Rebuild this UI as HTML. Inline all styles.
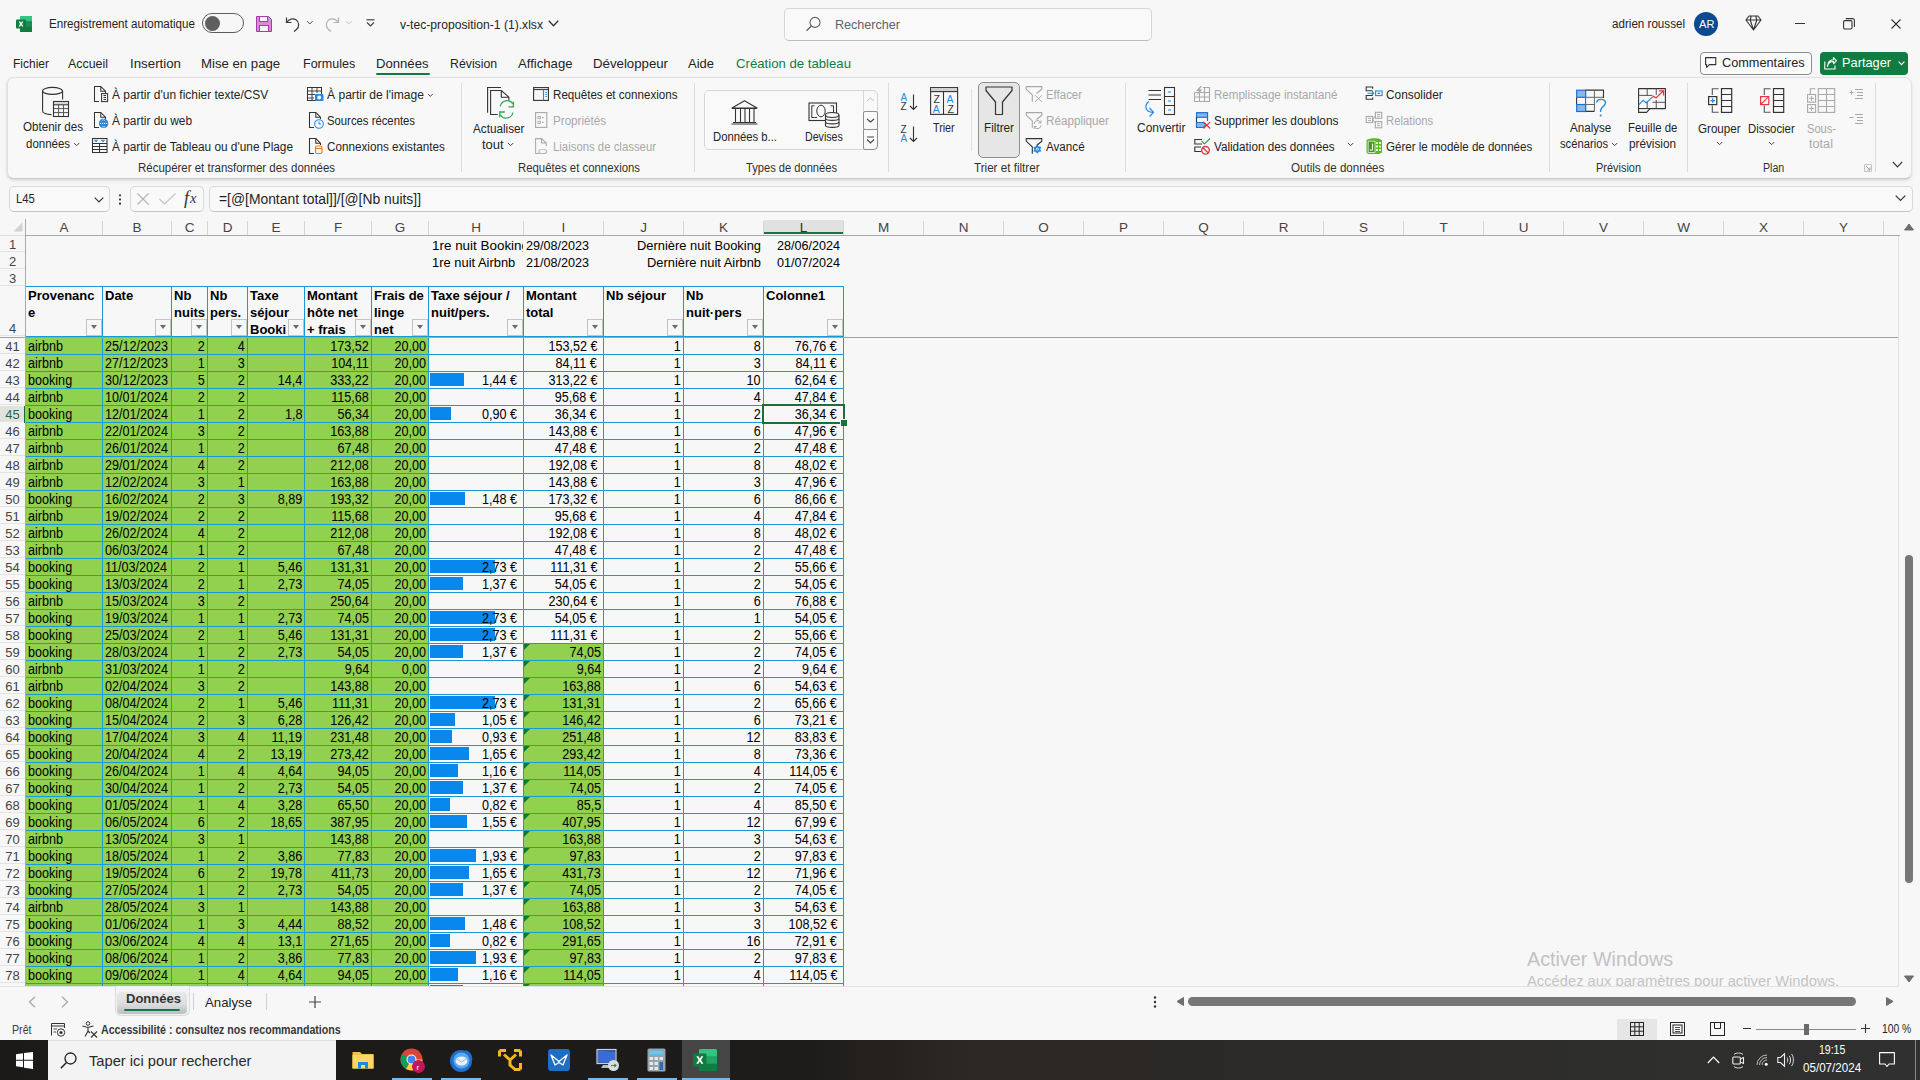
<!DOCTYPE html>
<html><head><meta charset="utf-8"><style>
html,body {margin:0;padding:0;width:1920px;height:1080px;overflow:hidden;background:#f7f7f7;font-family:"Liberation Sans",sans-serif}
div {box-sizing:border-box}

.grid {position:absolute;left:0;top:0;width:1920px;height:1080px;overflow:hidden}
.ch {position:absolute;top:219px;height:16px;line-height:17px;text-align:center;font-size:13.5px;color:#444;}
.ch.sel {background:#e1e1e1;color:#2e2e2e;border-bottom:2px solid #1e7145;height:14px;top:220px;line-height:15px}
.chsep {position:absolute;top:221px;height:14px;width:1px;background:#d4d4d4}
.rh {position:absolute;left:0;width:25px;text-align:center;font-size:13px;color:#444;box-sizing:border-box;border-bottom:1px solid #e3e3e3}
.rh.sel {background:#e1e1e1;color:#1e6e3c}
.c {position:absolute;font-size:13px;letter-spacing:-0.2px;line-height:16px;color:#000;white-space:nowrap}
.c.r {text-align:right}
.clip {position:absolute;overflow:hidden}
.th {position:absolute;font-weight:bold;font-size:13px;color:#000;}
.tht {position:absolute;left:2px;top:0px;line-height:17px;white-space:nowrap;letter-spacing:0px}
.fb {position:absolute;right:0px;bottom:0px;width:16px;height:17px;border:1px solid #c4c4c4;background:#f7f7f7;box-sizing:border-box}
.fb i {position:absolute;left:3.5px;top:5px;width:0;height:0;border-left:3.5px solid transparent;border-right:3.5px solid transparent;border-top:4.5px solid #6a6a6a}
.td {position:absolute;height:16px;font-size:13px;letter-spacing:-0.2px;line-height:16px;color:#000;white-space:nowrap;overflow:hidden}
.td span {position:absolute;top:0px;font-size:14px;letter-spacing:0;transform:scaleX(.9)}
.td.l span {left:2px;transform-origin:0 0}
.td.r span {right:2px;transform-origin:100% 0}
.bar {position:absolute;left:1px;top:1px;height:13px;background:#0888ec}
.tri {position:absolute;left:0;top:0;width:0;height:0;border-top:6px solid #0a7d2c;border-right:6px solid transparent}
.vl {position:absolute;width:1px;background:#1a9ad4}
.hl {position:absolute;left:25px;width:819px;height:1px;background:#1a9ad4}
.selbox {position:absolute;border:2px solid #1e6e3c;box-sizing:content-box}


.abs {position:absolute}
.t {position:absolute;white-space:nowrap;color:#242424}
svg {overflow:visible}

</style></head><body>
<div class="grid">
<div class="ch" style="left:26px;width:76px">A</div>
<div class="chsep" style="left:102px"></div>
<div class="ch" style="left:103px;width:68px">B</div>
<div class="chsep" style="left:171px"></div>
<div class="ch" style="left:172px;width:35px">C</div>
<div class="chsep" style="left:207px"></div>
<div class="ch" style="left:208px;width:39px">D</div>
<div class="chsep" style="left:247px"></div>
<div class="ch" style="left:248px;width:56px">E</div>
<div class="chsep" style="left:304px"></div>
<div class="ch" style="left:305px;width:66px">F</div>
<div class="chsep" style="left:371px"></div>
<div class="ch" style="left:372px;width:56px">G</div>
<div class="chsep" style="left:428px"></div>
<div class="ch" style="left:429px;width:94px">H</div>
<div class="chsep" style="left:523px"></div>
<div class="ch" style="left:524px;width:79px">I</div>
<div class="chsep" style="left:603px"></div>
<div class="ch" style="left:604px;width:79px">J</div>
<div class="chsep" style="left:683px"></div>
<div class="ch" style="left:684px;width:79px">K</div>
<div class="chsep" style="left:763px"></div>
<div class="ch sel" style="left:764px;width:79px">L</div>
<div class="chsep" style="left:843px"></div>
<div class="ch" style="left:844px;width:79px">M</div>
<div class="chsep" style="left:923px"></div>
<div class="ch" style="left:924px;width:79px">N</div>
<div class="chsep" style="left:1003px"></div>
<div class="ch" style="left:1004px;width:79px">O</div>
<div class="chsep" style="left:1083px"></div>
<div class="ch" style="left:1084px;width:79px">P</div>
<div class="chsep" style="left:1163px"></div>
<div class="ch" style="left:1164px;width:79px">Q</div>
<div class="chsep" style="left:1243px"></div>
<div class="ch" style="left:1244px;width:79px">R</div>
<div class="chsep" style="left:1323px"></div>
<div class="ch" style="left:1324px;width:79px">S</div>
<div class="chsep" style="left:1403px"></div>
<div class="ch" style="left:1404px;width:79px">T</div>
<div class="chsep" style="left:1483px"></div>
<div class="ch" style="left:1484px;width:79px">U</div>
<div class="chsep" style="left:1563px"></div>
<div class="ch" style="left:1564px;width:79px">V</div>
<div class="chsep" style="left:1643px"></div>
<div class="ch" style="left:1644px;width:79px">W</div>
<div class="chsep" style="left:1723px"></div>
<div class="ch" style="left:1724px;width:79px">X</div>
<div class="chsep" style="left:1803px"></div>
<div class="ch" style="left:1804px;width:79px">Y</div>
<div class="chsep" style="left:1883px"></div>
<div class="rh" style="top:236px;height:16px;line-height:17px;padding-top:0px">1</div>
<div class="rh" style="top:253px;height:16px;line-height:17px;padding-top:0px">2</div>
<div class="rh" style="top:270px;height:16px;line-height:17px;padding-top:0px">3</div>
<div class="rh" style="top:287px;height:49px;line-height:17px;padding-top:33px">4</div>
<div class="rh" style="top:338px;height:16px;line-height:17px;padding-top:0px">41</div>
<div class="rh" style="top:355px;height:16px;line-height:17px;padding-top:0px">42</div>
<div class="rh" style="top:372px;height:16px;line-height:17px;padding-top:0px">43</div>
<div class="rh" style="top:389px;height:16px;line-height:17px;padding-top:0px">44</div>
<div class="rh sel" style="top:406px;height:16px;line-height:17px;padding-top:0px">45</div>
<div class="rh" style="top:423px;height:16px;line-height:17px;padding-top:0px">46</div>
<div class="rh" style="top:440px;height:16px;line-height:17px;padding-top:0px">47</div>
<div class="rh" style="top:457px;height:16px;line-height:17px;padding-top:0px">48</div>
<div class="rh" style="top:474px;height:16px;line-height:17px;padding-top:0px">49</div>
<div class="rh" style="top:491px;height:16px;line-height:17px;padding-top:0px">50</div>
<div class="rh" style="top:508px;height:16px;line-height:17px;padding-top:0px">51</div>
<div class="rh" style="top:525px;height:16px;line-height:17px;padding-top:0px">52</div>
<div class="rh" style="top:542px;height:16px;line-height:17px;padding-top:0px">53</div>
<div class="rh" style="top:559px;height:16px;line-height:17px;padding-top:0px">54</div>
<div class="rh" style="top:576px;height:16px;line-height:17px;padding-top:0px">55</div>
<div class="rh" style="top:593px;height:16px;line-height:17px;padding-top:0px">56</div>
<div class="rh" style="top:610px;height:16px;line-height:17px;padding-top:0px">57</div>
<div class="rh" style="top:627px;height:16px;line-height:17px;padding-top:0px">58</div>
<div class="rh" style="top:644px;height:16px;line-height:17px;padding-top:0px">59</div>
<div class="rh" style="top:661px;height:16px;line-height:17px;padding-top:0px">60</div>
<div class="rh" style="top:678px;height:16px;line-height:17px;padding-top:0px">61</div>
<div class="rh" style="top:695px;height:16px;line-height:17px;padding-top:0px">62</div>
<div class="rh" style="top:712px;height:16px;line-height:17px;padding-top:0px">63</div>
<div class="rh" style="top:729px;height:16px;line-height:17px;padding-top:0px">64</div>
<div class="rh" style="top:746px;height:16px;line-height:17px;padding-top:0px">65</div>
<div class="rh" style="top:763px;height:16px;line-height:17px;padding-top:0px">66</div>
<div class="rh" style="top:780px;height:16px;line-height:17px;padding-top:0px">67</div>
<div class="rh" style="top:797px;height:16px;line-height:17px;padding-top:0px">68</div>
<div class="rh" style="top:814px;height:16px;line-height:17px;padding-top:0px">69</div>
<div class="rh" style="top:831px;height:16px;line-height:17px;padding-top:0px">70</div>
<div class="rh" style="top:848px;height:16px;line-height:17px;padding-top:0px">71</div>
<div class="rh" style="top:865px;height:16px;line-height:17px;padding-top:0px">72</div>
<div class="rh" style="top:882px;height:16px;line-height:17px;padding-top:0px">73</div>
<div class="rh" style="top:899px;height:16px;line-height:17px;padding-top:0px">74</div>
<div class="rh" style="top:916px;height:16px;line-height:17px;padding-top:0px">75</div>
<div class="rh" style="top:933px;height:16px;line-height:17px;padding-top:0px">76</div>
<div class="rh" style="top:950px;height:16px;line-height:17px;padding-top:0px">77</div>
<div class="rh" style="top:967px;height:16px;line-height:17px;padding-top:0px">78</div>
<div class="rh" style="top:984px;height:16px;line-height:17px;padding-top:0px">79</div>
<div class="clip" style="left:429px;top:236px;width:94px;height:16px"><div class="t" style="left:2.7px;top:1.7px;font-size:13.5px;line-height:15.5px;color:#000;font-weight:normal;transform-origin:0 0;transform:scaleX(0.9943);">1re nuit Booking</div></div>
<div class="t" style="left:431.7px;top:254.7px;font-size:13.5px;line-height:15.5px;color:#000;font-weight:normal;transform-origin:0 0;transform:scaleX(0.9569);">1re nuit Airbnb</div>
<div class="t" style="left:526px;top:237.7px;font-size:13.5px;line-height:15.5px;color:#000;font-weight:normal;transform-origin:0 0;transform:scaleX(0.9325);">29/08/2023</div>
<div class="t" style="left:526px;top:254.7px;font-size:13.5px;line-height:15.5px;color:#000;font-weight:normal;transform-origin:0 0;transform:scaleX(0.9325);">21/08/2023</div>
<div class="t" style="left:637px;top:237.7px;font-size:13.5px;line-height:15.5px;color:#000;font-weight:normal;transform-origin:0 0;transform:scaleX(0.9552);">Dernière nuit Booking</div>
<div class="t" style="left:647px;top:254.7px;font-size:13.5px;line-height:15.5px;color:#000;font-weight:normal;transform-origin:0 0;transform:scaleX(0.9555);">Dernière nuit Airbnb</div>
<div class="t" style="left:776.7px;top:237.7px;font-size:13.5px;line-height:15.5px;color:#000;font-weight:normal;transform-origin:0 0;transform:scaleX(0.9325);">28/06/2024</div>
<div class="t" style="left:776.7px;top:254.7px;font-size:13.5px;line-height:15.5px;color:#000;font-weight:normal;transform-origin:0 0;transform:scaleX(0.9325);">01/07/2024</div>
<div style="position:absolute;left:24px;top:406px;width:2px;height:17px;background:#1e6e3c"></div>
<div class="th" style="left:26px;top:287px;width:76px;height:49px"><div class="tht">Provenanc<br>e</div><div class="fb"><i></i></div></div>
<div class="th" style="left:103px;top:287px;width:68px;height:49px"><div class="tht">Date</div><div class="fb"><i></i></div></div>
<div class="th" style="left:172px;top:287px;width:35px;height:49px"><div class="tht">Nb<br>nuits</div><div class="fb"><i></i></div></div>
<div class="th" style="left:208px;top:287px;width:39px;height:49px"><div class="tht">Nb<br>pers.</div><div class="fb"><i></i></div></div>
<div class="th" style="left:248px;top:287px;width:56px;height:49px"><div class="tht">Taxe<br>séjour<br>Booki</div><div class="fb"><i></i></div></div>
<div class="th" style="left:305px;top:287px;width:66px;height:49px"><div class="tht">Montant<br>hôte net<br>+ frais</div><div class="fb"><i></i></div></div>
<div class="th" style="left:372px;top:287px;width:56px;height:49px"><div class="tht">Frais de<br>linge<br>net</div><div class="fb"><i></i></div></div>
<div class="th" style="left:429px;top:287px;width:94px;height:49px"><div class="tht">Taxe séjour /<br>nuit/pers.</div><div class="fb"><i></i></div></div>
<div class="th" style="left:524px;top:287px;width:79px;height:49px"><div class="tht">Montant<br>total</div><div class="fb"><i></i></div></div>
<div class="th" style="left:604px;top:287px;width:79px;height:49px"><div class="tht">Nb séjour</div><div class="fb"><i></i></div></div>
<div class="th" style="left:684px;top:287px;width:79px;height:49px"><div class="tht">Nb<br>nuit·pers</div><div class="fb"><i></i></div></div>
<div class="th" style="left:764px;top:287px;width:79px;height:49px"><div class="tht">Colonne1</div><div class="fb"><i></i></div></div>
<div class="td l" style="left:26px;top:338px;width:76px;background:#92d050"><span>airbnb</span></div>
<div class="td l" style="left:103px;top:338px;width:68px;background:#92d050"><span>25/12/2023</span></div>
<div class="td r" style="left:172px;top:338px;width:35px;background:#92d050"><span>2</span></div>
<div class="td r" style="left:208px;top:338px;width:39px;background:#92d050"><span>4</span></div>
<div class="td r" style="left:248px;top:338px;width:56px;background:#92d050"></div>
<div class="td r" style="left:305px;top:338px;width:66px;background:#92d050"><span>173,52</span></div>
<div class="td r" style="left:372px;top:338px;width:56px;background:#92d050"><span>20,00</span></div>
<div class="td r" style="left:429px;top:338px;width:94px;background:transparent"></div>
<div class="td r" style="left:524px;top:338px;width:79px;background:transparent"><span style="right:6px">153,52 €</span></div>
<div class="td r" style="left:604px;top:338px;width:79px;background:transparent"><span>1</span></div>
<div class="td r" style="left:684px;top:338px;width:79px;background:transparent"><span>8</span></div>
<div class="td r" style="left:764px;top:338px;width:79px;background:transparent"><span style="right:6px">76,76 €</span></div>
<div class="td l" style="left:26px;top:355px;width:76px;background:#92d050"><span>airbnb</span></div>
<div class="td l" style="left:103px;top:355px;width:68px;background:#92d050"><span>27/12/2023</span></div>
<div class="td r" style="left:172px;top:355px;width:35px;background:#92d050"><span>1</span></div>
<div class="td r" style="left:208px;top:355px;width:39px;background:#92d050"><span>3</span></div>
<div class="td r" style="left:248px;top:355px;width:56px;background:#92d050"></div>
<div class="td r" style="left:305px;top:355px;width:66px;background:#92d050"><span>104,11</span></div>
<div class="td r" style="left:372px;top:355px;width:56px;background:#92d050"><span>20,00</span></div>
<div class="td r" style="left:429px;top:355px;width:94px;background:transparent"></div>
<div class="td r" style="left:524px;top:355px;width:79px;background:transparent"><span style="right:6px">84,11 €</span></div>
<div class="td r" style="left:604px;top:355px;width:79px;background:transparent"><span>1</span></div>
<div class="td r" style="left:684px;top:355px;width:79px;background:transparent"><span>3</span></div>
<div class="td r" style="left:764px;top:355px;width:79px;background:transparent"><span style="right:6px">84,11 €</span></div>
<div class="td l" style="left:26px;top:372px;width:76px;background:#92d050"><span>booking</span></div>
<div class="td l" style="left:103px;top:372px;width:68px;background:#92d050"><span>30/12/2023</span></div>
<div class="td r" style="left:172px;top:372px;width:35px;background:#92d050"><span>5</span></div>
<div class="td r" style="left:208px;top:372px;width:39px;background:#92d050"><span>2</span></div>
<div class="td r" style="left:248px;top:372px;width:56px;background:#92d050"><span>14,4</span></div>
<div class="td r" style="left:305px;top:372px;width:66px;background:#92d050"><span>333,22</span></div>
<div class="td r" style="left:372px;top:372px;width:56px;background:#92d050"><span>20,00</span></div>
<div class="td r" style="left:429px;top:372px;width:94px;background:transparent"><b class="bar" style="width:34px"></b><span style="right:6px">1,44 €</span></div>
<div class="td r" style="left:524px;top:372px;width:79px;background:transparent"><span style="right:6px">313,22 €</span></div>
<div class="td r" style="left:604px;top:372px;width:79px;background:transparent"><span>1</span></div>
<div class="td r" style="left:684px;top:372px;width:79px;background:transparent"><span>10</span></div>
<div class="td r" style="left:764px;top:372px;width:79px;background:transparent"><span style="right:6px">62,64 €</span></div>
<div class="td l" style="left:26px;top:389px;width:76px;background:#92d050"><span>airbnb</span></div>
<div class="td l" style="left:103px;top:389px;width:68px;background:#92d050"><span>10/01/2024</span></div>
<div class="td r" style="left:172px;top:389px;width:35px;background:#92d050"><span>2</span></div>
<div class="td r" style="left:208px;top:389px;width:39px;background:#92d050"><span>2</span></div>
<div class="td r" style="left:248px;top:389px;width:56px;background:#92d050"></div>
<div class="td r" style="left:305px;top:389px;width:66px;background:#92d050"><span>115,68</span></div>
<div class="td r" style="left:372px;top:389px;width:56px;background:#92d050"><span>20,00</span></div>
<div class="td r" style="left:429px;top:389px;width:94px;background:transparent"></div>
<div class="td r" style="left:524px;top:389px;width:79px;background:transparent"><span style="right:6px">95,68 €</span></div>
<div class="td r" style="left:604px;top:389px;width:79px;background:transparent"><span>1</span></div>
<div class="td r" style="left:684px;top:389px;width:79px;background:transparent"><span>4</span></div>
<div class="td r" style="left:764px;top:389px;width:79px;background:transparent"><span style="right:6px">47,84 €</span></div>
<div class="td l" style="left:26px;top:406px;width:76px;background:#92d050"><span>booking</span></div>
<div class="td l" style="left:103px;top:406px;width:68px;background:#92d050"><span>12/01/2024</span></div>
<div class="td r" style="left:172px;top:406px;width:35px;background:#92d050"><span>1</span></div>
<div class="td r" style="left:208px;top:406px;width:39px;background:#92d050"><span>2</span></div>
<div class="td r" style="left:248px;top:406px;width:56px;background:#92d050"><span>1,8</span></div>
<div class="td r" style="left:305px;top:406px;width:66px;background:#92d050"><span>56,34</span></div>
<div class="td r" style="left:372px;top:406px;width:56px;background:#92d050"><span>20,00</span></div>
<div class="td r" style="left:429px;top:406px;width:94px;background:transparent"><b class="bar" style="width:21px"></b><span style="right:6px">0,90 €</span></div>
<div class="td r" style="left:524px;top:406px;width:79px;background:transparent"><span style="right:6px">36,34 €</span></div>
<div class="td r" style="left:604px;top:406px;width:79px;background:transparent"><span>1</span></div>
<div class="td r" style="left:684px;top:406px;width:79px;background:transparent"><span>2</span></div>
<div class="td r" style="left:764px;top:406px;width:79px;background:transparent"><span style="right:6px">36,34 €</span></div>
<div class="td l" style="left:26px;top:423px;width:76px;background:#92d050"><span>airbnb</span></div>
<div class="td l" style="left:103px;top:423px;width:68px;background:#92d050"><span>22/01/2024</span></div>
<div class="td r" style="left:172px;top:423px;width:35px;background:#92d050"><span>3</span></div>
<div class="td r" style="left:208px;top:423px;width:39px;background:#92d050"><span>2</span></div>
<div class="td r" style="left:248px;top:423px;width:56px;background:#92d050"></div>
<div class="td r" style="left:305px;top:423px;width:66px;background:#92d050"><span>163,88</span></div>
<div class="td r" style="left:372px;top:423px;width:56px;background:#92d050"><span>20,00</span></div>
<div class="td r" style="left:429px;top:423px;width:94px;background:transparent"></div>
<div class="td r" style="left:524px;top:423px;width:79px;background:transparent"><span style="right:6px">143,88 €</span></div>
<div class="td r" style="left:604px;top:423px;width:79px;background:transparent"><span>1</span></div>
<div class="td r" style="left:684px;top:423px;width:79px;background:transparent"><span>6</span></div>
<div class="td r" style="left:764px;top:423px;width:79px;background:transparent"><span style="right:6px">47,96 €</span></div>
<div class="td l" style="left:26px;top:440px;width:76px;background:#92d050"><span>airbnb</span></div>
<div class="td l" style="left:103px;top:440px;width:68px;background:#92d050"><span>26/01/2024</span></div>
<div class="td r" style="left:172px;top:440px;width:35px;background:#92d050"><span>1</span></div>
<div class="td r" style="left:208px;top:440px;width:39px;background:#92d050"><span>2</span></div>
<div class="td r" style="left:248px;top:440px;width:56px;background:#92d050"></div>
<div class="td r" style="left:305px;top:440px;width:66px;background:#92d050"><span>67,48</span></div>
<div class="td r" style="left:372px;top:440px;width:56px;background:#92d050"><span>20,00</span></div>
<div class="td r" style="left:429px;top:440px;width:94px;background:transparent"></div>
<div class="td r" style="left:524px;top:440px;width:79px;background:transparent"><span style="right:6px">47,48 €</span></div>
<div class="td r" style="left:604px;top:440px;width:79px;background:transparent"><span>1</span></div>
<div class="td r" style="left:684px;top:440px;width:79px;background:transparent"><span>2</span></div>
<div class="td r" style="left:764px;top:440px;width:79px;background:transparent"><span style="right:6px">47,48 €</span></div>
<div class="td l" style="left:26px;top:457px;width:76px;background:#92d050"><span>airbnb</span></div>
<div class="td l" style="left:103px;top:457px;width:68px;background:#92d050"><span>29/01/2024</span></div>
<div class="td r" style="left:172px;top:457px;width:35px;background:#92d050"><span>4</span></div>
<div class="td r" style="left:208px;top:457px;width:39px;background:#92d050"><span>2</span></div>
<div class="td r" style="left:248px;top:457px;width:56px;background:#92d050"></div>
<div class="td r" style="left:305px;top:457px;width:66px;background:#92d050"><span>212,08</span></div>
<div class="td r" style="left:372px;top:457px;width:56px;background:#92d050"><span>20,00</span></div>
<div class="td r" style="left:429px;top:457px;width:94px;background:transparent"></div>
<div class="td r" style="left:524px;top:457px;width:79px;background:transparent"><span style="right:6px">192,08 €</span></div>
<div class="td r" style="left:604px;top:457px;width:79px;background:transparent"><span>1</span></div>
<div class="td r" style="left:684px;top:457px;width:79px;background:transparent"><span>8</span></div>
<div class="td r" style="left:764px;top:457px;width:79px;background:transparent"><span style="right:6px">48,02 €</span></div>
<div class="td l" style="left:26px;top:474px;width:76px;background:#92d050"><span>airbnb</span></div>
<div class="td l" style="left:103px;top:474px;width:68px;background:#92d050"><span>12/02/2024</span></div>
<div class="td r" style="left:172px;top:474px;width:35px;background:#92d050"><span>3</span></div>
<div class="td r" style="left:208px;top:474px;width:39px;background:#92d050"><span>1</span></div>
<div class="td r" style="left:248px;top:474px;width:56px;background:#92d050"></div>
<div class="td r" style="left:305px;top:474px;width:66px;background:#92d050"><span>163,88</span></div>
<div class="td r" style="left:372px;top:474px;width:56px;background:#92d050"><span>20,00</span></div>
<div class="td r" style="left:429px;top:474px;width:94px;background:transparent"></div>
<div class="td r" style="left:524px;top:474px;width:79px;background:transparent"><span style="right:6px">143,88 €</span></div>
<div class="td r" style="left:604px;top:474px;width:79px;background:transparent"><span>1</span></div>
<div class="td r" style="left:684px;top:474px;width:79px;background:transparent"><span>3</span></div>
<div class="td r" style="left:764px;top:474px;width:79px;background:transparent"><span style="right:6px">47,96 €</span></div>
<div class="td l" style="left:26px;top:491px;width:76px;background:#92d050"><span>booking</span></div>
<div class="td l" style="left:103px;top:491px;width:68px;background:#92d050"><span>16/02/2024</span></div>
<div class="td r" style="left:172px;top:491px;width:35px;background:#92d050"><span>2</span></div>
<div class="td r" style="left:208px;top:491px;width:39px;background:#92d050"><span>3</span></div>
<div class="td r" style="left:248px;top:491px;width:56px;background:#92d050"><span>8,89</span></div>
<div class="td r" style="left:305px;top:491px;width:66px;background:#92d050"><span>193,32</span></div>
<div class="td r" style="left:372px;top:491px;width:56px;background:#92d050"><span>20,00</span></div>
<div class="td r" style="left:429px;top:491px;width:94px;background:transparent"><b class="bar" style="width:35px"></b><span style="right:6px">1,48 €</span></div>
<div class="td r" style="left:524px;top:491px;width:79px;background:transparent"><span style="right:6px">173,32 €</span></div>
<div class="td r" style="left:604px;top:491px;width:79px;background:transparent"><span>1</span></div>
<div class="td r" style="left:684px;top:491px;width:79px;background:transparent"><span>6</span></div>
<div class="td r" style="left:764px;top:491px;width:79px;background:transparent"><span style="right:6px">86,66 €</span></div>
<div class="td l" style="left:26px;top:508px;width:76px;background:#92d050"><span>airbnb</span></div>
<div class="td l" style="left:103px;top:508px;width:68px;background:#92d050"><span>19/02/2024</span></div>
<div class="td r" style="left:172px;top:508px;width:35px;background:#92d050"><span>2</span></div>
<div class="td r" style="left:208px;top:508px;width:39px;background:#92d050"><span>2</span></div>
<div class="td r" style="left:248px;top:508px;width:56px;background:#92d050"></div>
<div class="td r" style="left:305px;top:508px;width:66px;background:#92d050"><span>115,68</span></div>
<div class="td r" style="left:372px;top:508px;width:56px;background:#92d050"><span>20,00</span></div>
<div class="td r" style="left:429px;top:508px;width:94px;background:transparent"></div>
<div class="td r" style="left:524px;top:508px;width:79px;background:transparent"><span style="right:6px">95,68 €</span></div>
<div class="td r" style="left:604px;top:508px;width:79px;background:transparent"><span>1</span></div>
<div class="td r" style="left:684px;top:508px;width:79px;background:transparent"><span>4</span></div>
<div class="td r" style="left:764px;top:508px;width:79px;background:transparent"><span style="right:6px">47,84 €</span></div>
<div class="td l" style="left:26px;top:525px;width:76px;background:#92d050"><span>airbnb</span></div>
<div class="td l" style="left:103px;top:525px;width:68px;background:#92d050"><span>26/02/2024</span></div>
<div class="td r" style="left:172px;top:525px;width:35px;background:#92d050"><span>4</span></div>
<div class="td r" style="left:208px;top:525px;width:39px;background:#92d050"><span>2</span></div>
<div class="td r" style="left:248px;top:525px;width:56px;background:#92d050"></div>
<div class="td r" style="left:305px;top:525px;width:66px;background:#92d050"><span>212,08</span></div>
<div class="td r" style="left:372px;top:525px;width:56px;background:#92d050"><span>20,00</span></div>
<div class="td r" style="left:429px;top:525px;width:94px;background:transparent"></div>
<div class="td r" style="left:524px;top:525px;width:79px;background:transparent"><span style="right:6px">192,08 €</span></div>
<div class="td r" style="left:604px;top:525px;width:79px;background:transparent"><span>1</span></div>
<div class="td r" style="left:684px;top:525px;width:79px;background:transparent"><span>8</span></div>
<div class="td r" style="left:764px;top:525px;width:79px;background:transparent"><span style="right:6px">48,02 €</span></div>
<div class="td l" style="left:26px;top:542px;width:76px;background:#92d050"><span>airbnb</span></div>
<div class="td l" style="left:103px;top:542px;width:68px;background:#92d050"><span>06/03/2024</span></div>
<div class="td r" style="left:172px;top:542px;width:35px;background:#92d050"><span>1</span></div>
<div class="td r" style="left:208px;top:542px;width:39px;background:#92d050"><span>2</span></div>
<div class="td r" style="left:248px;top:542px;width:56px;background:#92d050"></div>
<div class="td r" style="left:305px;top:542px;width:66px;background:#92d050"><span>67,48</span></div>
<div class="td r" style="left:372px;top:542px;width:56px;background:#92d050"><span>20,00</span></div>
<div class="td r" style="left:429px;top:542px;width:94px;background:transparent"></div>
<div class="td r" style="left:524px;top:542px;width:79px;background:transparent"><span style="right:6px">47,48 €</span></div>
<div class="td r" style="left:604px;top:542px;width:79px;background:transparent"><span>1</span></div>
<div class="td r" style="left:684px;top:542px;width:79px;background:transparent"><span>2</span></div>
<div class="td r" style="left:764px;top:542px;width:79px;background:transparent"><span style="right:6px">47,48 €</span></div>
<div class="td l" style="left:26px;top:559px;width:76px;background:#92d050"><span>booking</span></div>
<div class="td l" style="left:103px;top:559px;width:68px;background:#92d050"><span>11/03/2024</span></div>
<div class="td r" style="left:172px;top:559px;width:35px;background:#92d050"><span>2</span></div>
<div class="td r" style="left:208px;top:559px;width:39px;background:#92d050"><span>1</span></div>
<div class="td r" style="left:248px;top:559px;width:56px;background:#92d050"><span>5,46</span></div>
<div class="td r" style="left:305px;top:559px;width:66px;background:#92d050"><span>131,31</span></div>
<div class="td r" style="left:372px;top:559px;width:56px;background:#92d050"><span>20,00</span></div>
<div class="td r" style="left:429px;top:559px;width:94px;background:transparent"><b class="bar" style="width:65px"></b><span style="right:6px">2,73 €</span></div>
<div class="td r" style="left:524px;top:559px;width:79px;background:transparent"><span style="right:6px">111,31 €</span></div>
<div class="td r" style="left:604px;top:559px;width:79px;background:transparent"><span>1</span></div>
<div class="td r" style="left:684px;top:559px;width:79px;background:transparent"><span>2</span></div>
<div class="td r" style="left:764px;top:559px;width:79px;background:transparent"><span style="right:6px">55,66 €</span></div>
<div class="td l" style="left:26px;top:576px;width:76px;background:#92d050"><span>booking</span></div>
<div class="td l" style="left:103px;top:576px;width:68px;background:#92d050"><span>13/03/2024</span></div>
<div class="td r" style="left:172px;top:576px;width:35px;background:#92d050"><span>2</span></div>
<div class="td r" style="left:208px;top:576px;width:39px;background:#92d050"><span>1</span></div>
<div class="td r" style="left:248px;top:576px;width:56px;background:#92d050"><span>2,73</span></div>
<div class="td r" style="left:305px;top:576px;width:66px;background:#92d050"><span>74,05</span></div>
<div class="td r" style="left:372px;top:576px;width:56px;background:#92d050"><span>20,00</span></div>
<div class="td r" style="left:429px;top:576px;width:94px;background:transparent"><b class="bar" style="width:33px"></b><span style="right:6px">1,37 €</span></div>
<div class="td r" style="left:524px;top:576px;width:79px;background:transparent"><span style="right:6px">54,05 €</span></div>
<div class="td r" style="left:604px;top:576px;width:79px;background:transparent"><span>1</span></div>
<div class="td r" style="left:684px;top:576px;width:79px;background:transparent"><span>2</span></div>
<div class="td r" style="left:764px;top:576px;width:79px;background:transparent"><span style="right:6px">54,05 €</span></div>
<div class="td l" style="left:26px;top:593px;width:76px;background:#92d050"><span>airbnb</span></div>
<div class="td l" style="left:103px;top:593px;width:68px;background:#92d050"><span>15/03/2024</span></div>
<div class="td r" style="left:172px;top:593px;width:35px;background:#92d050"><span>3</span></div>
<div class="td r" style="left:208px;top:593px;width:39px;background:#92d050"><span>2</span></div>
<div class="td r" style="left:248px;top:593px;width:56px;background:#92d050"></div>
<div class="td r" style="left:305px;top:593px;width:66px;background:#92d050"><span>250,64</span></div>
<div class="td r" style="left:372px;top:593px;width:56px;background:#92d050"><span>20,00</span></div>
<div class="td r" style="left:429px;top:593px;width:94px;background:transparent"></div>
<div class="td r" style="left:524px;top:593px;width:79px;background:transparent"><span style="right:6px">230,64 €</span></div>
<div class="td r" style="left:604px;top:593px;width:79px;background:transparent"><span>1</span></div>
<div class="td r" style="left:684px;top:593px;width:79px;background:transparent"><span>6</span></div>
<div class="td r" style="left:764px;top:593px;width:79px;background:transparent"><span style="right:6px">76,88 €</span></div>
<div class="td l" style="left:26px;top:610px;width:76px;background:#92d050"><span>booking</span></div>
<div class="td l" style="left:103px;top:610px;width:68px;background:#92d050"><span>19/03/2024</span></div>
<div class="td r" style="left:172px;top:610px;width:35px;background:#92d050"><span>1</span></div>
<div class="td r" style="left:208px;top:610px;width:39px;background:#92d050"><span>1</span></div>
<div class="td r" style="left:248px;top:610px;width:56px;background:#92d050"><span>2,73</span></div>
<div class="td r" style="left:305px;top:610px;width:66px;background:#92d050"><span>74,05</span></div>
<div class="td r" style="left:372px;top:610px;width:56px;background:#92d050"><span>20,00</span></div>
<div class="td r" style="left:429px;top:610px;width:94px;background:transparent"><b class="bar" style="width:65px"></b><span style="right:6px">2,73 €</span></div>
<div class="td r" style="left:524px;top:610px;width:79px;background:transparent"><span style="right:6px">54,05 €</span></div>
<div class="td r" style="left:604px;top:610px;width:79px;background:transparent"><span>1</span></div>
<div class="td r" style="left:684px;top:610px;width:79px;background:transparent"><span>1</span></div>
<div class="td r" style="left:764px;top:610px;width:79px;background:transparent"><span style="right:6px">54,05 €</span></div>
<div class="td l" style="left:26px;top:627px;width:76px;background:#92d050"><span>booking</span></div>
<div class="td l" style="left:103px;top:627px;width:68px;background:#92d050"><span>25/03/2024</span></div>
<div class="td r" style="left:172px;top:627px;width:35px;background:#92d050"><span>2</span></div>
<div class="td r" style="left:208px;top:627px;width:39px;background:#92d050"><span>1</span></div>
<div class="td r" style="left:248px;top:627px;width:56px;background:#92d050"><span>5,46</span></div>
<div class="td r" style="left:305px;top:627px;width:66px;background:#92d050"><span>131,31</span></div>
<div class="td r" style="left:372px;top:627px;width:56px;background:#92d050"><span>20,00</span></div>
<div class="td r" style="left:429px;top:627px;width:94px;background:transparent"><b class="bar" style="width:65px"></b><span style="right:6px">2,73 €</span></div>
<div class="td r" style="left:524px;top:627px;width:79px;background:transparent"><span style="right:6px">111,31 €</span></div>
<div class="td r" style="left:604px;top:627px;width:79px;background:transparent"><span>1</span></div>
<div class="td r" style="left:684px;top:627px;width:79px;background:transparent"><span>2</span></div>
<div class="td r" style="left:764px;top:627px;width:79px;background:transparent"><span style="right:6px">55,66 €</span></div>
<div class="td l" style="left:26px;top:644px;width:76px;background:#92d050"><span>booking</span></div>
<div class="td l" style="left:103px;top:644px;width:68px;background:#92d050"><span>28/03/2024</span></div>
<div class="td r" style="left:172px;top:644px;width:35px;background:#92d050"><span>1</span></div>
<div class="td r" style="left:208px;top:644px;width:39px;background:#92d050"><span>2</span></div>
<div class="td r" style="left:248px;top:644px;width:56px;background:#92d050"><span>2,73</span></div>
<div class="td r" style="left:305px;top:644px;width:66px;background:#92d050"><span>54,05</span></div>
<div class="td r" style="left:372px;top:644px;width:56px;background:#92d050"><span>20,00</span></div>
<div class="td r" style="left:429px;top:644px;width:94px;background:transparent"><b class="bar" style="width:33px"></b><span style="right:6px">1,37 €</span></div>
<div class="td r" style="left:524px;top:644px;width:79px;background:#92d050"><b class="tri"></b><span>74,05</span></div>
<div class="td r" style="left:604px;top:644px;width:79px;background:transparent"><span>1</span></div>
<div class="td r" style="left:684px;top:644px;width:79px;background:transparent"><span>2</span></div>
<div class="td r" style="left:764px;top:644px;width:79px;background:transparent"><span style="right:6px">74,05 €</span></div>
<div class="td l" style="left:26px;top:661px;width:76px;background:#92d050"><span>airbnb</span></div>
<div class="td l" style="left:103px;top:661px;width:68px;background:#92d050"><span>31/03/2024</span></div>
<div class="td r" style="left:172px;top:661px;width:35px;background:#92d050"><span>1</span></div>
<div class="td r" style="left:208px;top:661px;width:39px;background:#92d050"><span>2</span></div>
<div class="td r" style="left:248px;top:661px;width:56px;background:#92d050"></div>
<div class="td r" style="left:305px;top:661px;width:66px;background:#92d050"><span>9,64</span></div>
<div class="td r" style="left:372px;top:661px;width:56px;background:#92d050"><span>0,00</span></div>
<div class="td r" style="left:429px;top:661px;width:94px;background:transparent"></div>
<div class="td r" style="left:524px;top:661px;width:79px;background:#92d050"><b class="tri"></b><span>9,64</span></div>
<div class="td r" style="left:604px;top:661px;width:79px;background:transparent"><span>1</span></div>
<div class="td r" style="left:684px;top:661px;width:79px;background:transparent"><span>2</span></div>
<div class="td r" style="left:764px;top:661px;width:79px;background:transparent"><span style="right:6px">9,64 €</span></div>
<div class="td l" style="left:26px;top:678px;width:76px;background:#92d050"><span>airbnb</span></div>
<div class="td l" style="left:103px;top:678px;width:68px;background:#92d050"><span>02/04/2024</span></div>
<div class="td r" style="left:172px;top:678px;width:35px;background:#92d050"><span>3</span></div>
<div class="td r" style="left:208px;top:678px;width:39px;background:#92d050"><span>2</span></div>
<div class="td r" style="left:248px;top:678px;width:56px;background:#92d050"></div>
<div class="td r" style="left:305px;top:678px;width:66px;background:#92d050"><span>143,88</span></div>
<div class="td r" style="left:372px;top:678px;width:56px;background:#92d050"><span>20,00</span></div>
<div class="td r" style="left:429px;top:678px;width:94px;background:transparent"></div>
<div class="td r" style="left:524px;top:678px;width:79px;background:#92d050"><b class="tri"></b><span>163,88</span></div>
<div class="td r" style="left:604px;top:678px;width:79px;background:transparent"><span>1</span></div>
<div class="td r" style="left:684px;top:678px;width:79px;background:transparent"><span>6</span></div>
<div class="td r" style="left:764px;top:678px;width:79px;background:transparent"><span style="right:6px">54,63 €</span></div>
<div class="td l" style="left:26px;top:695px;width:76px;background:#92d050"><span>booking</span></div>
<div class="td l" style="left:103px;top:695px;width:68px;background:#92d050"><span>08/04/2024</span></div>
<div class="td r" style="left:172px;top:695px;width:35px;background:#92d050"><span>2</span></div>
<div class="td r" style="left:208px;top:695px;width:39px;background:#92d050"><span>1</span></div>
<div class="td r" style="left:248px;top:695px;width:56px;background:#92d050"><span>5,46</span></div>
<div class="td r" style="left:305px;top:695px;width:66px;background:#92d050"><span>111,31</span></div>
<div class="td r" style="left:372px;top:695px;width:56px;background:#92d050"><span>20,00</span></div>
<div class="td r" style="left:429px;top:695px;width:94px;background:transparent"><b class="bar" style="width:65px"></b><span style="right:6px">2,73 €</span></div>
<div class="td r" style="left:524px;top:695px;width:79px;background:#92d050"><b class="tri"></b><span>131,31</span></div>
<div class="td r" style="left:604px;top:695px;width:79px;background:transparent"><span>1</span></div>
<div class="td r" style="left:684px;top:695px;width:79px;background:transparent"><span>2</span></div>
<div class="td r" style="left:764px;top:695px;width:79px;background:transparent"><span style="right:6px">65,66 €</span></div>
<div class="td l" style="left:26px;top:712px;width:76px;background:#92d050"><span>booking</span></div>
<div class="td l" style="left:103px;top:712px;width:68px;background:#92d050"><span>15/04/2024</span></div>
<div class="td r" style="left:172px;top:712px;width:35px;background:#92d050"><span>2</span></div>
<div class="td r" style="left:208px;top:712px;width:39px;background:#92d050"><span>3</span></div>
<div class="td r" style="left:248px;top:712px;width:56px;background:#92d050"><span>6,28</span></div>
<div class="td r" style="left:305px;top:712px;width:66px;background:#92d050"><span>126,42</span></div>
<div class="td r" style="left:372px;top:712px;width:56px;background:#92d050"><span>20,00</span></div>
<div class="td r" style="left:429px;top:712px;width:94px;background:transparent"><b class="bar" style="width:25px"></b><span style="right:6px">1,05 €</span></div>
<div class="td r" style="left:524px;top:712px;width:79px;background:#92d050"><b class="tri"></b><span>146,42</span></div>
<div class="td r" style="left:604px;top:712px;width:79px;background:transparent"><span>1</span></div>
<div class="td r" style="left:684px;top:712px;width:79px;background:transparent"><span>6</span></div>
<div class="td r" style="left:764px;top:712px;width:79px;background:transparent"><span style="right:6px">73,21 €</span></div>
<div class="td l" style="left:26px;top:729px;width:76px;background:#92d050"><span>booking</span></div>
<div class="td l" style="left:103px;top:729px;width:68px;background:#92d050"><span>17/04/2024</span></div>
<div class="td r" style="left:172px;top:729px;width:35px;background:#92d050"><span>3</span></div>
<div class="td r" style="left:208px;top:729px;width:39px;background:#92d050"><span>4</span></div>
<div class="td r" style="left:248px;top:729px;width:56px;background:#92d050"><span>11,19</span></div>
<div class="td r" style="left:305px;top:729px;width:66px;background:#92d050"><span>231,48</span></div>
<div class="td r" style="left:372px;top:729px;width:56px;background:#92d050"><span>20,00</span></div>
<div class="td r" style="left:429px;top:729px;width:94px;background:transparent"><b class="bar" style="width:22px"></b><span style="right:6px">0,93 €</span></div>
<div class="td r" style="left:524px;top:729px;width:79px;background:#92d050"><b class="tri"></b><span>251,48</span></div>
<div class="td r" style="left:604px;top:729px;width:79px;background:transparent"><span>1</span></div>
<div class="td r" style="left:684px;top:729px;width:79px;background:transparent"><span>12</span></div>
<div class="td r" style="left:764px;top:729px;width:79px;background:transparent"><span style="right:6px">83,83 €</span></div>
<div class="td l" style="left:26px;top:746px;width:76px;background:#92d050"><span>booking</span></div>
<div class="td l" style="left:103px;top:746px;width:68px;background:#92d050"><span>20/04/2024</span></div>
<div class="td r" style="left:172px;top:746px;width:35px;background:#92d050"><span>4</span></div>
<div class="td r" style="left:208px;top:746px;width:39px;background:#92d050"><span>2</span></div>
<div class="td r" style="left:248px;top:746px;width:56px;background:#92d050"><span>13,19</span></div>
<div class="td r" style="left:305px;top:746px;width:66px;background:#92d050"><span>273,42</span></div>
<div class="td r" style="left:372px;top:746px;width:56px;background:#92d050"><span>20,00</span></div>
<div class="td r" style="left:429px;top:746px;width:94px;background:transparent"><b class="bar" style="width:39px"></b><span style="right:6px">1,65 €</span></div>
<div class="td r" style="left:524px;top:746px;width:79px;background:#92d050"><b class="tri"></b><span>293,42</span></div>
<div class="td r" style="left:604px;top:746px;width:79px;background:transparent"><span>1</span></div>
<div class="td r" style="left:684px;top:746px;width:79px;background:transparent"><span>8</span></div>
<div class="td r" style="left:764px;top:746px;width:79px;background:transparent"><span style="right:6px">73,36 €</span></div>
<div class="td l" style="left:26px;top:763px;width:76px;background:#92d050"><span>booking</span></div>
<div class="td l" style="left:103px;top:763px;width:68px;background:#92d050"><span>26/04/2024</span></div>
<div class="td r" style="left:172px;top:763px;width:35px;background:#92d050"><span>1</span></div>
<div class="td r" style="left:208px;top:763px;width:39px;background:#92d050"><span>4</span></div>
<div class="td r" style="left:248px;top:763px;width:56px;background:#92d050"><span>4,64</span></div>
<div class="td r" style="left:305px;top:763px;width:66px;background:#92d050"><span>94,05</span></div>
<div class="td r" style="left:372px;top:763px;width:56px;background:#92d050"><span>20,00</span></div>
<div class="td r" style="left:429px;top:763px;width:94px;background:transparent"><b class="bar" style="width:28px"></b><span style="right:6px">1,16 €</span></div>
<div class="td r" style="left:524px;top:763px;width:79px;background:#92d050"><b class="tri"></b><span>114,05</span></div>
<div class="td r" style="left:604px;top:763px;width:79px;background:transparent"><span>1</span></div>
<div class="td r" style="left:684px;top:763px;width:79px;background:transparent"><span>4</span></div>
<div class="td r" style="left:764px;top:763px;width:79px;background:transparent"><span style="right:6px">114,05 €</span></div>
<div class="td l" style="left:26px;top:780px;width:76px;background:#92d050"><span>booking</span></div>
<div class="td l" style="left:103px;top:780px;width:68px;background:#92d050"><span>30/04/2024</span></div>
<div class="td r" style="left:172px;top:780px;width:35px;background:#92d050"><span>1</span></div>
<div class="td r" style="left:208px;top:780px;width:39px;background:#92d050"><span>2</span></div>
<div class="td r" style="left:248px;top:780px;width:56px;background:#92d050"><span>2,73</span></div>
<div class="td r" style="left:305px;top:780px;width:66px;background:#92d050"><span>54,05</span></div>
<div class="td r" style="left:372px;top:780px;width:56px;background:#92d050"><span>20,00</span></div>
<div class="td r" style="left:429px;top:780px;width:94px;background:transparent"><b class="bar" style="width:33px"></b><span style="right:6px">1,37 €</span></div>
<div class="td r" style="left:524px;top:780px;width:79px;background:#92d050"><b class="tri"></b><span>74,05</span></div>
<div class="td r" style="left:604px;top:780px;width:79px;background:transparent"><span>1</span></div>
<div class="td r" style="left:684px;top:780px;width:79px;background:transparent"><span>2</span></div>
<div class="td r" style="left:764px;top:780px;width:79px;background:transparent"><span style="right:6px">74,05 €</span></div>
<div class="td l" style="left:26px;top:797px;width:76px;background:#92d050"><span>booking</span></div>
<div class="td l" style="left:103px;top:797px;width:68px;background:#92d050"><span>01/05/2024</span></div>
<div class="td r" style="left:172px;top:797px;width:35px;background:#92d050"><span>1</span></div>
<div class="td r" style="left:208px;top:797px;width:39px;background:#92d050"><span>4</span></div>
<div class="td r" style="left:248px;top:797px;width:56px;background:#92d050"><span>3,28</span></div>
<div class="td r" style="left:305px;top:797px;width:66px;background:#92d050"><span>65,50</span></div>
<div class="td r" style="left:372px;top:797px;width:56px;background:#92d050"><span>20,00</span></div>
<div class="td r" style="left:429px;top:797px;width:94px;background:transparent"><b class="bar" style="width:20px"></b><span style="right:6px">0,82 €</span></div>
<div class="td r" style="left:524px;top:797px;width:79px;background:#92d050"><b class="tri"></b><span>85,5</span></div>
<div class="td r" style="left:604px;top:797px;width:79px;background:transparent"><span>1</span></div>
<div class="td r" style="left:684px;top:797px;width:79px;background:transparent"><span>4</span></div>
<div class="td r" style="left:764px;top:797px;width:79px;background:transparent"><span style="right:6px">85,50 €</span></div>
<div class="td l" style="left:26px;top:814px;width:76px;background:#92d050"><span>booking</span></div>
<div class="td l" style="left:103px;top:814px;width:68px;background:#92d050"><span>06/05/2024</span></div>
<div class="td r" style="left:172px;top:814px;width:35px;background:#92d050"><span>6</span></div>
<div class="td r" style="left:208px;top:814px;width:39px;background:#92d050"><span>2</span></div>
<div class="td r" style="left:248px;top:814px;width:56px;background:#92d050"><span>18,65</span></div>
<div class="td r" style="left:305px;top:814px;width:66px;background:#92d050"><span>387,95</span></div>
<div class="td r" style="left:372px;top:814px;width:56px;background:#92d050"><span>20,00</span></div>
<div class="td r" style="left:429px;top:814px;width:94px;background:transparent"><b class="bar" style="width:37px"></b><span style="right:6px">1,55 €</span></div>
<div class="td r" style="left:524px;top:814px;width:79px;background:#92d050"><b class="tri"></b><span>407,95</span></div>
<div class="td r" style="left:604px;top:814px;width:79px;background:transparent"><span>1</span></div>
<div class="td r" style="left:684px;top:814px;width:79px;background:transparent"><span>12</span></div>
<div class="td r" style="left:764px;top:814px;width:79px;background:transparent"><span style="right:6px">67,99 €</span></div>
<div class="td l" style="left:26px;top:831px;width:76px;background:#92d050"><span>airbnb</span></div>
<div class="td l" style="left:103px;top:831px;width:68px;background:#92d050"><span>13/05/2024</span></div>
<div class="td r" style="left:172px;top:831px;width:35px;background:#92d050"><span>3</span></div>
<div class="td r" style="left:208px;top:831px;width:39px;background:#92d050"><span>1</span></div>
<div class="td r" style="left:248px;top:831px;width:56px;background:#92d050"></div>
<div class="td r" style="left:305px;top:831px;width:66px;background:#92d050"><span>143,88</span></div>
<div class="td r" style="left:372px;top:831px;width:56px;background:#92d050"><span>20,00</span></div>
<div class="td r" style="left:429px;top:831px;width:94px;background:transparent"></div>
<div class="td r" style="left:524px;top:831px;width:79px;background:#92d050"><b class="tri"></b><span>163,88</span></div>
<div class="td r" style="left:604px;top:831px;width:79px;background:transparent"><span>1</span></div>
<div class="td r" style="left:684px;top:831px;width:79px;background:transparent"><span>3</span></div>
<div class="td r" style="left:764px;top:831px;width:79px;background:transparent"><span style="right:6px">54,63 €</span></div>
<div class="td l" style="left:26px;top:848px;width:76px;background:#92d050"><span>booking</span></div>
<div class="td l" style="left:103px;top:848px;width:68px;background:#92d050"><span>18/05/2024</span></div>
<div class="td r" style="left:172px;top:848px;width:35px;background:#92d050"><span>1</span></div>
<div class="td r" style="left:208px;top:848px;width:39px;background:#92d050"><span>2</span></div>
<div class="td r" style="left:248px;top:848px;width:56px;background:#92d050"><span>3,86</span></div>
<div class="td r" style="left:305px;top:848px;width:66px;background:#92d050"><span>77,83</span></div>
<div class="td r" style="left:372px;top:848px;width:56px;background:#92d050"><span>20,00</span></div>
<div class="td r" style="left:429px;top:848px;width:94px;background:transparent"><b class="bar" style="width:46px"></b><span style="right:6px">1,93 €</span></div>
<div class="td r" style="left:524px;top:848px;width:79px;background:#92d050"><b class="tri"></b><span>97,83</span></div>
<div class="td r" style="left:604px;top:848px;width:79px;background:transparent"><span>1</span></div>
<div class="td r" style="left:684px;top:848px;width:79px;background:transparent"><span>2</span></div>
<div class="td r" style="left:764px;top:848px;width:79px;background:transparent"><span style="right:6px">97,83 €</span></div>
<div class="td l" style="left:26px;top:865px;width:76px;background:#92d050"><span>booking</span></div>
<div class="td l" style="left:103px;top:865px;width:68px;background:#92d050"><span>19/05/2024</span></div>
<div class="td r" style="left:172px;top:865px;width:35px;background:#92d050"><span>6</span></div>
<div class="td r" style="left:208px;top:865px;width:39px;background:#92d050"><span>2</span></div>
<div class="td r" style="left:248px;top:865px;width:56px;background:#92d050"><span>19,78</span></div>
<div class="td r" style="left:305px;top:865px;width:66px;background:#92d050"><span>411,73</span></div>
<div class="td r" style="left:372px;top:865px;width:56px;background:#92d050"><span>20,00</span></div>
<div class="td r" style="left:429px;top:865px;width:94px;background:transparent"><b class="bar" style="width:39px"></b><span style="right:6px">1,65 €</span></div>
<div class="td r" style="left:524px;top:865px;width:79px;background:#92d050"><b class="tri"></b><span>431,73</span></div>
<div class="td r" style="left:604px;top:865px;width:79px;background:transparent"><span>1</span></div>
<div class="td r" style="left:684px;top:865px;width:79px;background:transparent"><span>12</span></div>
<div class="td r" style="left:764px;top:865px;width:79px;background:transparent"><span style="right:6px">71,96 €</span></div>
<div class="td l" style="left:26px;top:882px;width:76px;background:#92d050"><span>booking</span></div>
<div class="td l" style="left:103px;top:882px;width:68px;background:#92d050"><span>27/05/2024</span></div>
<div class="td r" style="left:172px;top:882px;width:35px;background:#92d050"><span>1</span></div>
<div class="td r" style="left:208px;top:882px;width:39px;background:#92d050"><span>2</span></div>
<div class="td r" style="left:248px;top:882px;width:56px;background:#92d050"><span>2,73</span></div>
<div class="td r" style="left:305px;top:882px;width:66px;background:#92d050"><span>54,05</span></div>
<div class="td r" style="left:372px;top:882px;width:56px;background:#92d050"><span>20,00</span></div>
<div class="td r" style="left:429px;top:882px;width:94px;background:transparent"><b class="bar" style="width:33px"></b><span style="right:6px">1,37 €</span></div>
<div class="td r" style="left:524px;top:882px;width:79px;background:#92d050"><b class="tri"></b><span>74,05</span></div>
<div class="td r" style="left:604px;top:882px;width:79px;background:transparent"><span>1</span></div>
<div class="td r" style="left:684px;top:882px;width:79px;background:transparent"><span>2</span></div>
<div class="td r" style="left:764px;top:882px;width:79px;background:transparent"><span style="right:6px">74,05 €</span></div>
<div class="td l" style="left:26px;top:899px;width:76px;background:#92d050"><span>airbnb</span></div>
<div class="td l" style="left:103px;top:899px;width:68px;background:#92d050"><span>28/05/2024</span></div>
<div class="td r" style="left:172px;top:899px;width:35px;background:#92d050"><span>3</span></div>
<div class="td r" style="left:208px;top:899px;width:39px;background:#92d050"><span>1</span></div>
<div class="td r" style="left:248px;top:899px;width:56px;background:#92d050"></div>
<div class="td r" style="left:305px;top:899px;width:66px;background:#92d050"><span>143,88</span></div>
<div class="td r" style="left:372px;top:899px;width:56px;background:#92d050"><span>20,00</span></div>
<div class="td r" style="left:429px;top:899px;width:94px;background:transparent"></div>
<div class="td r" style="left:524px;top:899px;width:79px;background:#92d050"><b class="tri"></b><span>163,88</span></div>
<div class="td r" style="left:604px;top:899px;width:79px;background:transparent"><span>1</span></div>
<div class="td r" style="left:684px;top:899px;width:79px;background:transparent"><span>3</span></div>
<div class="td r" style="left:764px;top:899px;width:79px;background:transparent"><span style="right:6px">54,63 €</span></div>
<div class="td l" style="left:26px;top:916px;width:76px;background:#92d050"><span>booking</span></div>
<div class="td l" style="left:103px;top:916px;width:68px;background:#92d050"><span>01/06/2024</span></div>
<div class="td r" style="left:172px;top:916px;width:35px;background:#92d050"><span>1</span></div>
<div class="td r" style="left:208px;top:916px;width:39px;background:#92d050"><span>3</span></div>
<div class="td r" style="left:248px;top:916px;width:56px;background:#92d050"><span>4,44</span></div>
<div class="td r" style="left:305px;top:916px;width:66px;background:#92d050"><span>88,52</span></div>
<div class="td r" style="left:372px;top:916px;width:56px;background:#92d050"><span>20,00</span></div>
<div class="td r" style="left:429px;top:916px;width:94px;background:transparent"><b class="bar" style="width:35px"></b><span style="right:6px">1,48 €</span></div>
<div class="td r" style="left:524px;top:916px;width:79px;background:#92d050"><b class="tri"></b><span>108,52</span></div>
<div class="td r" style="left:604px;top:916px;width:79px;background:transparent"><span>1</span></div>
<div class="td r" style="left:684px;top:916px;width:79px;background:transparent"><span>3</span></div>
<div class="td r" style="left:764px;top:916px;width:79px;background:transparent"><span style="right:6px">108,52 €</span></div>
<div class="td l" style="left:26px;top:933px;width:76px;background:#92d050"><span>booking</span></div>
<div class="td l" style="left:103px;top:933px;width:68px;background:#92d050"><span>03/06/2024</span></div>
<div class="td r" style="left:172px;top:933px;width:35px;background:#92d050"><span>4</span></div>
<div class="td r" style="left:208px;top:933px;width:39px;background:#92d050"><span>4</span></div>
<div class="td r" style="left:248px;top:933px;width:56px;background:#92d050"><span>13,1</span></div>
<div class="td r" style="left:305px;top:933px;width:66px;background:#92d050"><span>271,65</span></div>
<div class="td r" style="left:372px;top:933px;width:56px;background:#92d050"><span>20,00</span></div>
<div class="td r" style="left:429px;top:933px;width:94px;background:transparent"><b class="bar" style="width:20px"></b><span style="right:6px">0,82 €</span></div>
<div class="td r" style="left:524px;top:933px;width:79px;background:#92d050"><b class="tri"></b><span>291,65</span></div>
<div class="td r" style="left:604px;top:933px;width:79px;background:transparent"><span>1</span></div>
<div class="td r" style="left:684px;top:933px;width:79px;background:transparent"><span>16</span></div>
<div class="td r" style="left:764px;top:933px;width:79px;background:transparent"><span style="right:6px">72,91 €</span></div>
<div class="td l" style="left:26px;top:950px;width:76px;background:#92d050"><span>booking</span></div>
<div class="td l" style="left:103px;top:950px;width:68px;background:#92d050"><span>08/06/2024</span></div>
<div class="td r" style="left:172px;top:950px;width:35px;background:#92d050"><span>1</span></div>
<div class="td r" style="left:208px;top:950px;width:39px;background:#92d050"><span>2</span></div>
<div class="td r" style="left:248px;top:950px;width:56px;background:#92d050"><span>3,86</span></div>
<div class="td r" style="left:305px;top:950px;width:66px;background:#92d050"><span>77,83</span></div>
<div class="td r" style="left:372px;top:950px;width:56px;background:#92d050"><span>20,00</span></div>
<div class="td r" style="left:429px;top:950px;width:94px;background:transparent"><b class="bar" style="width:46px"></b><span style="right:6px">1,93 €</span></div>
<div class="td r" style="left:524px;top:950px;width:79px;background:#92d050"><b class="tri"></b><span>97,83</span></div>
<div class="td r" style="left:604px;top:950px;width:79px;background:transparent"><span>1</span></div>
<div class="td r" style="left:684px;top:950px;width:79px;background:transparent"><span>2</span></div>
<div class="td r" style="left:764px;top:950px;width:79px;background:transparent"><span style="right:6px">97,83 €</span></div>
<div class="td l" style="left:26px;top:967px;width:76px;background:#92d050"><span>booking</span></div>
<div class="td l" style="left:103px;top:967px;width:68px;background:#92d050"><span>09/06/2024</span></div>
<div class="td r" style="left:172px;top:967px;width:35px;background:#92d050"><span>1</span></div>
<div class="td r" style="left:208px;top:967px;width:39px;background:#92d050"><span>4</span></div>
<div class="td r" style="left:248px;top:967px;width:56px;background:#92d050"><span>4,64</span></div>
<div class="td r" style="left:305px;top:967px;width:66px;background:#92d050"><span>94,05</span></div>
<div class="td r" style="left:372px;top:967px;width:56px;background:#92d050"><span>20,00</span></div>
<div class="td r" style="left:429px;top:967px;width:94px;background:transparent"><b class="bar" style="width:28px"></b><span style="right:6px">1,16 €</span></div>
<div class="td r" style="left:524px;top:967px;width:79px;background:#92d050"><b class="tri"></b><span>114,05</span></div>
<div class="td r" style="left:604px;top:967px;width:79px;background:transparent"><span>1</span></div>
<div class="td r" style="left:684px;top:967px;width:79px;background:transparent"><span>4</span></div>
<div class="td r" style="left:764px;top:967px;width:79px;background:transparent"><span style="right:6px">114,05 €</span></div>
<div class="td" style="left:26px;top:984px;width:76px;height:4px;background:#92d050"></div>
<div class="td" style="left:103px;top:984px;width:68px;height:4px;background:#92d050"></div>
<div class="td" style="left:172px;top:984px;width:35px;height:4px;background:#92d050"></div>
<div class="td" style="left:208px;top:984px;width:39px;height:4px;background:#92d050"></div>
<div class="td" style="left:248px;top:984px;width:56px;height:4px;background:#92d050"></div>
<div class="td" style="left:305px;top:984px;width:66px;height:4px;background:#92d050"></div>
<div class="td" style="left:372px;top:984px;width:56px;height:4px;background:#92d050"></div>
<div class="td" style="left:429px;top:984px;width:94px;height:4px;background:transparent"><b class="bar" style="width:33px"></b></div>
<div class="td" style="left:524px;top:984px;width:79px;height:4px;background:#92d050"><b class="tri"></b></div>
<div class="td" style="left:604px;top:984px;width:79px;height:4px;background:transparent"></div>
<div class="td" style="left:684px;top:984px;width:79px;height:4px;background:transparent"></div>
<div class="td" style="left:764px;top:984px;width:79px;height:4px;background:transparent"></div>
<div class="vl" style="left:25px;top:286px;height:700px"></div>
<div class="vl" style="left:102px;top:286px;height:700px"></div>
<div class="vl" style="left:171px;top:286px;height:700px"></div>
<div class="vl" style="left:207px;top:286px;height:700px"></div>
<div class="vl" style="left:247px;top:286px;height:700px"></div>
<div class="vl" style="left:304px;top:286px;height:700px"></div>
<div class="vl" style="left:371px;top:286px;height:700px"></div>
<div class="vl" style="left:428px;top:286px;height:700px"></div>
<div class="vl" style="left:523px;top:286px;height:700px"></div>
<div class="vl" style="left:603px;top:286px;height:700px"></div>
<div class="vl" style="left:683px;top:286px;height:700px"></div>
<div class="vl" style="left:763px;top:286px;height:700px"></div>
<div class="vl" style="left:843px;top:286px;height:700px"></div>
<div class="hl" style="top:336px"></div>
<div class="hl" style="top:354px"></div>
<div class="hl" style="top:371px"></div>
<div class="hl" style="top:388px"></div>
<div class="hl" style="top:405px"></div>
<div class="hl" style="top:422px"></div>
<div class="hl" style="top:439px"></div>
<div class="hl" style="top:456px"></div>
<div class="hl" style="top:473px"></div>
<div class="hl" style="top:490px"></div>
<div class="hl" style="top:507px"></div>
<div class="hl" style="top:524px"></div>
<div class="hl" style="top:541px"></div>
<div class="hl" style="top:558px"></div>
<div class="hl" style="top:575px"></div>
<div class="hl" style="top:592px"></div>
<div class="hl" style="top:609px"></div>
<div class="hl" style="top:626px"></div>
<div class="hl" style="top:643px"></div>
<div class="hl" style="top:660px"></div>
<div class="hl" style="top:677px"></div>
<div class="hl" style="top:694px"></div>
<div class="hl" style="top:711px"></div>
<div class="hl" style="top:728px"></div>
<div class="hl" style="top:745px"></div>
<div class="hl" style="top:762px"></div>
<div class="hl" style="top:779px"></div>
<div class="hl" style="top:796px"></div>
<div class="hl" style="top:813px"></div>
<div class="hl" style="top:830px"></div>
<div class="hl" style="top:847px"></div>
<div class="hl" style="top:864px"></div>
<div class="hl" style="top:881px"></div>
<div class="hl" style="top:898px"></div>
<div class="hl" style="top:915px"></div>
<div class="hl" style="top:932px"></div>
<div class="hl" style="top:949px"></div>
<div class="hl" style="top:966px"></div>
<div class="hl" style="top:983px"></div>
<div class="hl" style="top:286px"></div>
<div style="position:absolute;left:0;top:337px;width:1899px;height:1px;background:#a3a3a3"></div>
<div class="selbox" style="left:762px;top:404px;width:79px;height:16px"></div>
<div style="position:absolute;left:840px;top:419px;width:7px;height:7px;background:#1e6e3c;border-left:1px solid #f7f7f7;border-top:1px solid #f7f7f7"></div>
</div>
<svg class="abs" style="left:16px;top:16px;" width="16" height="16" viewBox="0 0 16 16">
<rect x="4" y="0" width="12" height="16" rx="1" fill="#21a366"/>
<rect x="4" y="0" width="12" height="5.3" rx="1" fill="#33c481"/>
<rect x="4" y="10.7" width="12" height="5.3" fill="#107c41"/>
<rect x="10" y="5.3" width="6" height="5.4" fill="#185c37" opacity=".35"/>
<rect x="0" y="3.5" width="10" height="9" rx="1" fill="#107c41"/>
<path d="M2.6 5.6 L4.2 5.6 L5 7.2 L5.8 5.6 L7.4 5.6 L5.9 8 L7.5 10.4 L5.9 10.4 L5 8.8 L4.1 10.4 L2.5 10.4 L4.1 8 Z" fill="#fff"/></svg>
<div class="t" style="left:48.5px;top:16.7px;font-size:12.5px;line-height:14.4px;color:#242424;font-weight:normal;transform-origin:0 0;transform:scaleX(0.9298);">Enregistrement automatique</div>
<div class="abs" style="left:202px;top:13px;width:42px;height:20px;border:1px solid #5c5c5c;border-radius:10px;box-sizing:border-box"></div>
<div class="abs" style="left:204.5px;top:15.5px;width:15px;height:15px;background:#5f5f5f;border-radius:50%"></div>
<svg class="abs" style="left:256px;top:16px;" width="16" height="16" viewBox="0 0 16 16">
<path d="M0.5 0.5 H12.5 L15.5 3.5 V15.5 H0.5 Z" fill="#d58bd4" stroke="#a43da6" stroke-width="1"/>
<rect x="3.5" y="0.5" width="8" height="5" fill="#f7f7f7" stroke="#a43da6"/>
<rect x="3.5" y="9.5" width="9" height="6" fill="#f7f7f7" stroke="#a43da6"/></svg>
<svg class="abs" style="left:285px;top:16px;" width="16" height="16" viewBox="0 0 16 16"><path d="M1.5 1.5 V6.5 H6.5" fill="none" stroke="#3a3a3a" stroke-width="1.2"/><path d="M1.8 6.3 C4 3 8 2 11 3.8 C14.5 6 14.5 11 11.5 13.5 L9 15.5" fill="none" stroke="#3a3a3a" stroke-width="1.2"/></svg>
<svg class="abs" style="left:305.7px;top:19.7px;" width="7.6" height="5.6" viewBox="0 0 7.6 5.6"><path d="M1 1.1199999999999999 L3.8 3.9199999999999995 L6.6 1.1199999999999999" fill="none" stroke="#444" stroke-width="1"/></svg>
<svg class="abs" style="left:324px;top:16px;" width="16" height="16" viewBox="0 0 16 16"><path d="M14.5 1.5 V6.5 H9.5" fill="none" stroke="#b0b0b0" stroke-width="1.2"/><path d="M14.2 6.3 C12 3 8 2 5 3.8 C1.5 6 1.5 11 4.5 13.5 L7 15.5" fill="none" stroke="#b0b0b0" stroke-width="1.2"/></svg>
<svg class="abs" style="left:344.7px;top:19.7px;" width="7.6" height="5.6" viewBox="0 0 7.6 5.6"><path d="M1 1.1199999999999999 L3.8 3.9199999999999995 L6.6 1.1199999999999999" fill="none" stroke="#c0c0c0" stroke-width="1"/></svg>
<svg class="abs" style="left:366px;top:19px;" width="9" height="9" viewBox="0 0 9 9"><path d="M0.5 0.8 H8.5" stroke="#444" stroke-width="1.2"/><path d="M1 3.5 L4.5 7 L8 3.5" fill="none" stroke="#444" stroke-width="1.2"/></svg>
<div class="t" style="left:400px;top:17.5px;font-size:12.5px;line-height:14.4px;color:#242424;font-weight:normal;transform-origin:0 0;transform:scaleX(0.9711);">v-tec-proposition-1 (1).xlsx</div>
<svg class="abs" style="left:548px;top:20px;" width="11" height="7" viewBox="0 0 11 7"><path d="M0.8 0.8 L5.5 5.8 L10.2 0.8" fill="none" stroke="#333" stroke-width="1.3"/></svg>
<div class="abs" style="left:784px;top:8px;width:368px;height:33px;border:1px solid #d6d6d6;border-bottom:1px solid #bcbcbc;border-radius:5px;background:#f9f9f9;box-sizing:border-box"></div>
<svg class="abs" style="left:805px;top:16px;" width="16" height="16" viewBox="0 0 16 16"><circle cx="10" cy="6.4" r="5" fill="none" stroke="#5b6168" stroke-width="1.1"/><path d="M6.4 10 L1.5 14.8" stroke="#5b6168" stroke-width="1.3"/></svg>
<div class="t" style="left:834.5px;top:18.2px;font-size:13px;line-height:14.9px;color:#5f6368;font-weight:normal;transform-origin:0 0;transform:scaleX(0.9674);">Rechercher</div>
<div class="t" style="left:1612px;top:16.7px;font-size:12.5px;line-height:14.4px;color:#242424;font-weight:normal;transform-origin:0 0;transform:scaleX(0.9298);">adrien roussel</div>
<div class="abs" style="left:1694px;top:12px;width:24px;height:24px;background:#0b4a8f;border-radius:50%"></div>
<div class="t" style="left:1698.5px;top:17.9px;font-size:11.5px;line-height:13.2px;color:#ffffff;font-weight:normal;transform-origin:0 0;transform:scaleX(0.9702);">AR</div>
<svg class="abs" style="left:1745px;top:15px;" width="17" height="16" viewBox="0 0 17 16"><path d="M4 1 H13 L16 5 L8.5 15 L1 5 Z M1 5 H16 M6.2 1 L5.2 5 L8.5 15 L11.8 5 L10.8 1" fill="none" stroke="#333" stroke-width="1.1" stroke-linejoin="round"/></svg>
<div class="abs" style="left:1795px;top:23px;width:10px;height:1.2px;background:#333"></div>
<svg class="abs" style="left:1843px;top:18px;" width="12" height="12" viewBox="0 0 12 12"><rect x="0.6" y="2.6" width="8.4" height="8.4" rx="1.2" fill="none" stroke="#333" stroke-width="1.1"/><path d="M2.8 0.6 H9.8 A1.6 1.6 0 0 1 11.4 2.2 V9" fill="none" stroke="#333" stroke-width="1.1"/></svg>
<svg class="abs" style="left:1891px;top:19px;" width="10" height="10" viewBox="0 0 10 10"><path d="M0.5 0.5 L9.5 9.5 M9.5 0.5 L0.5 9.5" stroke="#333" stroke-width="1.1"/></svg>
<div class="t" style="left:12.5px;top:57.2px;font-size:13px;line-height:14.9px;color:#242424;font-weight:normal;transform-origin:0 0;transform:scaleX(0.9230);">Fichier</div>
<div class="t" style="left:68px;top:57.2px;font-size:13px;line-height:14.9px;color:#242424;font-weight:normal;transform-origin:0 0;transform:scaleX(0.9545);">Accueil</div>
<div class="t" style="left:130px;top:57.2px;font-size:13px;line-height:14.9px;color:#242424;font-weight:normal;transform-origin:0 0;transform:scaleX(1.0229);">Insertion</div>
<div class="t" style="left:201.3px;top:57.2px;font-size:13px;line-height:14.9px;color:#242424;font-weight:normal;transform-origin:0 0;transform:scaleX(1.0148);">Mise en page</div>
<div class="t" style="left:302.5px;top:57.2px;font-size:13px;line-height:14.9px;color:#242424;font-weight:normal;transform-origin:0 0;transform:scaleX(0.9636);">Formules</div>
<div class="t" style="left:376.3px;top:57.2px;font-size:13px;line-height:14.9px;color:#242424;font-weight:normal;transform-origin:0 0;transform:scaleX(1.0089);">Données</div>
<div class="t" style="left:449.5px;top:57.2px;font-size:13px;line-height:14.9px;color:#242424;font-weight:normal;transform-origin:0 0;transform:scaleX(0.9468);">Révision</div>
<div class="t" style="left:517.5px;top:57.2px;font-size:13px;line-height:14.9px;color:#242424;font-weight:normal;transform-origin:0 0;transform:scaleX(1.0099);">Affichage</div>
<div class="t" style="left:593px;top:57.2px;font-size:13px;line-height:14.9px;color:#242424;font-weight:normal;transform-origin:0 0;transform:scaleX(1.0175);">Développeur</div>
<div class="t" style="left:688px;top:57.2px;font-size:13px;line-height:14.9px;color:#242424;font-weight:normal;transform-origin:0 0;transform:scaleX(0.9993);">Aide</div>
<div class="t" style="left:736px;top:57.2px;font-size:13px;line-height:14.9px;color:#107c41;font-weight:normal;transform-origin:0 0;transform:scaleX(1.0136);">Création de tableau</div>
<div class="abs" style="left:376px;top:72.5px;width:54px;height:2.5px;background:#107c41;border-radius:1.5px"></div>
<div class="abs" style="left:1700px;top:51.5px;width:112px;height:23.5px;border:1px solid #8c8c8c;border-radius:4px;background:#fafafa;box-sizing:border-box"></div>
<svg class="abs" style="left:1705px;top:57px;" width="12" height="12" viewBox="0 0 12 12"><path d="M0.6 0.6 H10.8 V7.6 H4.4 L1.6 10.4 V7.6 H0.6 Z" fill="none" stroke="#333" stroke-width="1.1" stroke-linejoin="round"/></svg>
<div class="t" style="left:1721.7px;top:55.8px;font-size:13px;line-height:14.9px;color:#242424;font-weight:normal;transform-origin:0 0;transform:scaleX(0.9785);">Commentaires</div>
<div class="abs" style="left:1820px;top:51.5px;width:88px;height:23.5px;background:#107c41;border-radius:4px"></div>
<svg class="abs" style="left:1824px;top:57px;" width="13" height="13" viewBox="0 0 13 13"><path d="M0.8 4.5 V12 H11 V8.5" fill="none" stroke="#fff" stroke-width="1.1"/><path d="M3.5 9.5 C4 6 6.5 4.5 9.5 4.5 V6.8 L12.4 3.6 L9.5 0.6 V2.8 C6 2.8 3.8 5.5 3.5 9.5 Z" fill="none" stroke="#fff" stroke-width="1.1" stroke-linejoin="round"/></svg>
<div class="t" style="left:1841.5px;top:55.8px;font-size:13px;line-height:14.9px;color:#ffffff;font-weight:normal;transform-origin:0 0;transform:scaleX(0.9828);">Partager</div>
<svg class="abs" style="left:1897.5px;top:61px;" width="7" height="4.5" viewBox="0 0 7 4.5"><path d="M0.6 0.6 L3.5 3.6 L6.4 0.6" fill="none" stroke="#fff" stroke-width="1.2"/></svg>
<div class="abs" style="left:7px;top:77px;width:1905px;height:102px;border:1px solid #e2e2e2;border-bottom-color:#cacaca;border-radius:7px;background:#f8f8f8;box-shadow:0 2px 3px rgba(0,0,0,0.10),-1px 0 2px rgba(0,0,0,0.05)"></div>
<div class="abs" style="left:461px;top:83px;width:1px;height:89px;background:#dcdcdc"></div>
<div class="abs" style="left:694px;top:83px;width:1px;height:89px;background:#dcdcdc"></div>
<div class="abs" style="left:888px;top:83px;width:1px;height:89px;background:#dcdcdc"></div>
<div class="abs" style="left:1125px;top:83px;width:1px;height:89px;background:#dcdcdc"></div>
<div class="abs" style="left:1549px;top:83px;width:1px;height:89px;background:#dcdcdc"></div>
<div class="abs" style="left:1687px;top:83px;width:1px;height:89px;background:#dcdcdc"></div>
<div class="abs" style="left:1875px;top:83px;width:1px;height:89px;background:#dcdcdc"></div>
<div class="t" style="left:138px;top:160.7px;font-size:12.5px;line-height:14.4px;color:#303030;font-weight:normal;transform-origin:0 0;transform:scaleX(0.9176);">Récupérer et transformer des données</div>
<div class="t" style="left:517.7px;top:160.7px;font-size:12.5px;line-height:14.4px;color:#303030;font-weight:normal;transform-origin:0 0;transform:scaleX(0.9097);">Requêtes et connexions</div>
<div class="t" style="left:746px;top:160.7px;font-size:12.5px;line-height:14.4px;color:#303030;font-weight:normal;transform-origin:0 0;transform:scaleX(0.8908);">Types de données</div>
<div class="t" style="left:974px;top:160.7px;font-size:12.5px;line-height:14.4px;color:#303030;font-weight:normal;transform-origin:0 0;transform:scaleX(0.9308);">Trier et filtrer</div>
<div class="t" style="left:1290.7px;top:160.7px;font-size:12.5px;line-height:14.4px;color:#303030;font-weight:normal;transform-origin:0 0;transform:scaleX(0.9260);">Outils de données</div>
<div class="t" style="left:1596.4px;top:160.7px;font-size:12.5px;line-height:14.4px;color:#303030;font-weight:normal;transform-origin:0 0;transform:scaleX(0.8753);">Prévision</div>
<div class="t" style="left:1763.4px;top:160.7px;font-size:12.5px;line-height:14.4px;color:#303030;font-weight:normal;transform-origin:0 0;transform:scaleX(0.8474);">Plan</div>
<svg class="abs" style="left:42px;top:87px;" width="28" height="31" viewBox="0 0 28 31"><ellipse cx="10.5" cy="3.9" rx="10" ry="3.5" fill="none" stroke="#333" stroke-width="1.1"/><path d="M0.6 3.9 V24 C0.6 26 4 27.3 9.5 27.6" fill="none" stroke="#333" stroke-width="1.1"/><path d="M20.6 3.9 V12.6" fill="none" stroke="#333" stroke-width="1.1"/><rect x="11.5" y="14.5" width="15" height="15" fill="#f8f8f8" stroke="#333" stroke-width="1.1"/><rect x="12.2" y="15.2" width="13.6" height="2.4" fill="#d4d4d4"/><path d="M11.5 17.8 H26.5" stroke="#333" stroke-width="1"/><path d="M12 21.6 H26 M12 25.6 H26 M16.6 18 V29 M21.5 18 V29" stroke="#555" stroke-width="1"/></svg>
<div class="t" style="left:22.5px;top:120.2px;font-size:12.5px;line-height:14.4px;color:#242424;font-weight:normal;transform-origin:0 0;transform:scaleX(0.9286);">Obtenir des</div>
<div class="t" style="left:25.6px;top:136.7px;font-size:12.5px;line-height:14.4px;color:#242424;font-weight:normal;transform-origin:0 0;transform:scaleX(0.9175);">données</div>
<svg class="abs" style="left:72.9px;top:142.4px;" width="7.2" height="5.2" viewBox="0 0 7.2 5.2"><path d="M1 1.04 L3.6 3.6399999999999997 L6.2 1.04" fill="none" stroke="#444" stroke-width="1"/></svg>
<svg class="abs" style="left:93px;top:86px;" width="16" height="16" viewBox="0 0 16 16"><path d="M6 15.5 H1.5 V0.5 H7.8 L12.5 5.2 V7 M7.8 0.5 V5.2 H12.5" fill="none" stroke="#333" stroke-width="1.05"/><rect x="8.6" y="7.6" width="6" height="8" fill="#f8f8f8" stroke="#333" stroke-width="1.05"/><path d="M10.5 9.5 H13 M10.5 11.5 H13 M10.5 13.5 H13" stroke="#333" stroke-width="1"/></svg>
<div class="t" style="left:112.3px;top:87.7px;font-size:12.5px;line-height:14.4px;color:#242424;font-weight:normal;transform-origin:0 0;transform:scaleX(0.9556);">À partir d&#39;un fichier texte/CSV</div>
<svg class="abs" style="left:93px;top:112px;" width="16" height="16" viewBox="0 0 16 16"><path d="M6 15.5 H1.5 V0.5 H7.8 L12.5 5.2 V7 M7.8 0.5 V5.2 H12.5" fill="none" stroke="#333" stroke-width="1.05"/><circle cx="10.6" cy="11.4" r="4.7" fill="#1e8ae6"/><path d="M7 11.4 H14.2" stroke="#fff" stroke-width="1" stroke-dasharray="1.2 .8"/><path d="M9.6 8.6 L10.6 7.6 L11.6 8.6 M9.6 14.2 L10.6 15.2 L11.6 14.2" fill="none" stroke="#fff" stroke-width=".8"/></svg>
<div class="t" style="left:112.3px;top:114.0px;font-size:12.5px;line-height:14.4px;color:#242424;font-weight:normal;transform-origin:0 0;transform:scaleX(0.9517);">À partir du web</div>
<svg class="abs" style="left:92px;top:138px;" width="16" height="15" viewBox="0 0 16 15"><rect x="0.5" y="0.5" width="14.5" height="14" fill="none" stroke="#333" stroke-width="1.05"/><path d="M0.5 5.5 H15 M0.5 8.5 H15 M0.5 11.5 H15 M7.5 5.5 V14.5" stroke="#333" stroke-width="1"/><path d="M2.3 2.2 H5.8 L4.05 3.9 Z M9.3 2.2 H12.8 L11.05 3.9 Z" fill="#1e8ae6" stroke="#1e8ae6" stroke-width=".6"/></svg>
<div class="t" style="left:112.3px;top:139.7px;font-size:12.5px;line-height:14.4px;color:#242424;font-weight:normal;transform-origin:0 0;transform:scaleX(0.9468);">À partir de Tableau ou d&#39;une Plage</div>
<svg class="abs" style="left:307px;top:87px;" width="17" height="15" viewBox="0 0 17 15"><rect x="0.5" y="0.5" width="14" height="13" fill="none" stroke="#333"/><path d="M0.5 4 H14.5 M0.5 7.5 H8 M0.5 11 H7 M5 0.5 V13.5 M10 0.5 V6" stroke="#333" stroke-width=".9"/><rect x="8" y="7" width="8.5" height="7" rx="1" fill="#1e8ae6"/><circle cx="12.2" cy="10.5" r="2" fill="#f8f8f8"/></svg>
<div class="t" style="left:327px;top:87.7px;font-size:12.5px;line-height:14.4px;color:#242424;font-weight:normal;transform-origin:0 0;transform:scaleX(0.9667);">À partir de l&#39;image</div>
<svg class="abs" style="left:427.1px;top:93.1px;" width="6.8" height="4.8" viewBox="0 0 6.8 4.8"><path d="M1 0.96 L3.4 3.36 L5.8 0.96" fill="none" stroke="#444" stroke-width="1"/></svg>
<svg class="abs" style="left:308px;top:112px;" width="16" height="16" viewBox="0 0 16 16"><path d="M6 15.5 H1.5 V0.5 H7.8 L12.5 5.2 V7 M7.8 0.5 V5.2 H12.5" fill="none" stroke="#333" stroke-width="1.05"/><circle cx="11" cy="12" r="4.3" fill="#f8f8f8" stroke="#1e8ae6" stroke-width="1.1"/><path d="M11 9.5 V12 H13" fill="none" stroke="#1e8ae6" stroke-width="1"/></svg>
<div class="t" style="left:327px;top:114.0px;font-size:12.5px;line-height:14.4px;color:#242424;font-weight:normal;transform-origin:0 0;transform:scaleX(0.9047);">Sources récentes</div>
<svg class="abs" style="left:308px;top:138px;" width="16" height="16" viewBox="0 0 16 16"><path d="M6 15.5 H1.5 V0.5 H7.8 L12.5 5.2 V7 M7.8 0.5 V5.2 H12.5" fill="none" stroke="#333" stroke-width="1.05"/><rect x="7.5" y="8" width="6.5" height="7.5" rx="1.5" fill="#f8f8f8" stroke="#e8781e" stroke-width="1.1"/><path d="M7.5 10.5 H14" stroke="#e8781e"/></svg>
<div class="t" style="left:327px;top:139.7px;font-size:12.5px;line-height:14.4px;color:#242424;font-weight:normal;transform-origin:0 0;transform:scaleX(0.9367);">Connexions existantes</div>
<svg class="abs" style="left:487px;top:87px;" width="29" height="31" viewBox="0 0 29 31"><path d="M0.6 25.7 V0.5 H14" fill="none" stroke="#333" stroke-width="1.1"/><path d="M3.6 10 V27.5 H10.7 M3.6 10 V3.5 H14.3 L21.9 10.2 V13.5 M14.3 3.5 V10.2 H21.9" fill="none" stroke="#333" stroke-width="1.1"/><path d="M13.2 19.3 A7 7 0 0 1 26 17" fill="none" stroke="#2ea44f" stroke-width="1.2"/><path d="M26 25.5 A7 7 0 0 1 13.2 27.8" fill="none" stroke="#2ea44f" stroke-width="1.2"/><path d="M26.4 14.5 V19.8 H21.5" fill="none" stroke="#2ea44f" stroke-width="1.3"/><path d="M12.8 30.2 V25 H17.8" fill="none" stroke="#2ea44f" stroke-width="1.3"/></svg>
<div class="t" style="left:472.5px;top:121.7px;font-size:12.5px;line-height:14.4px;color:#242424;font-weight:normal;transform-origin:0 0;transform:scaleX(0.9384);">Actualiser</div>
<div class="t" style="left:482px;top:138.2px;font-size:12.5px;line-height:14.4px;color:#242424;font-weight:normal;transform-origin:0 0;transform:scaleX(1.0409);">tout</div>
<svg class="abs" style="left:506.9px;top:142.4px;" width="7.2" height="5.2" viewBox="0 0 7.2 5.2"><path d="M1 1.04 L3.6 3.6399999999999997 L6.2 1.04" fill="none" stroke="#444" stroke-width="1"/></svg>
<svg class="abs" style="left:533px;top:87px;" width="16" height="14" viewBox="0 0 16 14"><rect x="0.6" y="0.6" width="14.8" height="12.8" fill="none" stroke="#333" stroke-width="1.1"/><path d="M0.6 2.6 H15.4" stroke="#333" stroke-width="1"/><path d="M10.5 2.8 V13.4" stroke="#1e8ae6" stroke-width="1.1"/><path d="M12.3 5.5 H13.9 M12.3 7.5 H13.9 M12.3 9.5 H13.9" stroke="#1e8ae6" stroke-width="1"/></svg>
<div class="t" style="left:553px;top:87.7px;font-size:12.5px;line-height:14.4px;color:#242424;font-weight:normal;transform-origin:0 0;transform:scaleX(0.9283);">Requêtes et connexions</div>
<svg class="abs" style="left:535px;top:112px;" width="13" height="16" viewBox="0 0 13 16"><rect x="0.6" y="0.6" width="11.2" height="14.8" fill="none" stroke="#a8a8a8" stroke-width="1.1"/><rect x="3" y="4.5" width="2.4" height="2.2" fill="none" stroke="#a8a8a8" stroke-width=".9"/><rect x="3" y="9.3" width="2.4" height="2.2" fill="none" stroke="#a8a8a8" stroke-width=".9"/><path d="M7 5.6 H8.8 M7 10.4 H8.8" stroke="#a8a8a8" stroke-width="1"/></svg>
<div class="t" style="left:553px;top:114.0px;font-size:12.5px;line-height:14.4px;color:#a8a8a8;font-weight:normal;transform-origin:0 0;transform:scaleX(0.9304);">Propriétés</div>
<svg class="abs" style="left:535px;top:138px;" width="15" height="17" viewBox="0 0 15 17"><path d="M4.5 15.5 H0.6 V0.6 H6.5 L11.3 5 V8 M6.5 0.6 V5 H11.3" fill="none" stroke="#a8a8a8" stroke-width="1.05"/><path d="M6.5 11.5 C3 11.5 3 15.5 6.5 15.5 H8 M9 11.5 C12.5 11.5 12.5 15.5 9 15.5 H7.5 M7 11.5 H8.5" fill="none" stroke="#b8b8b8" stroke-width="1.1"/></svg>
<div class="t" style="left:553px;top:139.7px;font-size:12.5px;line-height:14.4px;color:#a8a8a8;font-weight:normal;transform-origin:0 0;transform:scaleX(0.9095);">Liaisons de classeur</div>
<div class="abs" style="left:704px;top:90px;width:174px;height:60px;border:1px solid #d6d6d6;border-radius:5px;background:#f9f9f9"></div>
<div class="abs" style="left:863px;top:90px;width:15px;height:60px;border-left:1px solid #d6d6d6"></div>
<div class="abs" style="left:863px;top:111px;width:15px;height:19px;border:1px solid #8f8f8f;border-radius:2px;background:#f9f9f9"></div>
<div class="abs" style="left:863px;top:129px;width:15px;height:21px;border:1px solid #8f8f8f;border-radius:0 0 4px 2px;background:#f9f9f9"></div>
<svg class="abs" style="left:866px;top:97px;" width="9" height="5" viewBox="0 0 9 5"><path d="M1 4 L4.5 1 L8 4" fill="none" stroke="#c0c0c0" stroke-width="1"/></svg>
<svg class="abs" style="left:866px;top:118px;" width="9" height="5" viewBox="0 0 9 5"><path d="M1 1 L4.5 4 L8 1" fill="none" stroke="#444" stroke-width="1.1"/></svg>
<svg class="abs" style="left:866px;top:136px;" width="9" height="8" viewBox="0 0 9 8"><path d="M1 1 H8 M1 3.5 L4.5 7 L8 3.5" fill="none" stroke="#444" stroke-width="1.1"/></svg>
<svg class="abs" style="left:731px;top:100px;" width="28" height="25" viewBox="0 0 28 25"><path d="M1 8 L13.5 0.8 L26 8 Z" fill="none" stroke="#333" stroke-width="1.1" stroke-linejoin="round"/><path d="M1 8.5 H26 M2 22.5 H25 M0.5 24 H26.5" stroke="#333" stroke-width="1.1"/><path d="M4.5 9 V22 M9.5 9 V22 M14 9 V22 M18.5 9 V22 M23 9 V22" stroke="#333" stroke-width="1.1"/></svg>
<div class="t" style="left:713.4px;top:130.2px;font-size:12.5px;line-height:14.4px;color:#242424;font-weight:normal;transform-origin:0 0;transform:scaleX(0.9030);">Données b...</div>
<svg class="abs" style="left:808px;top:102px;" width="32" height="27" viewBox="0 0 32 27"><rect x="1" y="1" width="27.5" height="17.5" fill="none" stroke="#333" stroke-width="1.1"/><path d="M6.5 3.8 H3.8 V15.5 H6.5 M22.5 3.8 H25.5 V15 M9 15.5 H6.5" fill="none" stroke="#333" stroke-width="1"/><ellipse cx="13" cy="9" rx="4.2" ry="5.8" fill="none" stroke="#333" stroke-width="1"/><g fill="#f8f8f8" stroke="#333" stroke-width="1.1"><path d="M17.5 13 V23.5 C17.5 26 31 26 31 23.5 V13"/><ellipse cx="24.2" cy="13" rx="6.7" ry="2.5"/><path d="M17.5 16.5 C17.5 19 31 19 31 16.5 M17.5 20 C17.5 22.5 31 22.5 31 20" fill="none"/></g></svg>
<div class="t" style="left:804.6px;top:130.2px;font-size:12.5px;line-height:14.4px;color:#242424;font-weight:normal;transform-origin:0 0;transform:scaleX(0.8503);">Devises</div>
<svg class="abs" style="left:900px;top:93px;" width="18" height="18" viewBox="0 0 18 18"><text x="0.5" y="8" font-size="10" font-family="Liberation Sans" fill="#1e8ae6">A</text><text x="0.5" y="17" font-size="10" font-family="Liberation Sans" fill="#333">Z</text><path d="M13.5 1.5 V16.5 M10 13 L13.5 16.5 L17 13" fill="none" stroke="#333" stroke-width="1.1"/></svg>
<svg class="abs" style="left:900px;top:125px;" width="18" height="18" viewBox="0 0 18 18"><text x="0.5" y="8" font-size="10" font-family="Liberation Sans" fill="#333">Z</text><text x="0.5" y="17" font-size="10" font-family="Liberation Sans" fill="#1e8ae6">A</text><path d="M13.5 1.5 V16.5 M10 13 L13.5 16.5 L17 13" fill="none" stroke="#333" stroke-width="1.1"/></svg>
<svg class="abs" style="left:930px;top:87px;" width="28" height="28" viewBox="0 0 28 28"><rect x="0.6" y="0.6" width="27" height="26.8" fill="none" stroke="#333" stroke-width="1.1"/><rect x="1.2" y="1.2" width="25.8" height="2.8" fill="#d0d0d0"/><path d="M0.6 4.6 H27.6" stroke="#333" stroke-width="1.1"/><path d="M13.5 4.6 V27.4" stroke="#333" stroke-width="1.1"/><text x="3.6" y="15.8" font-size="10.5" font-family="Liberation Sans" fill="#333">Z</text><text x="2.8" y="25.8" font-size="10.5" font-family="Liberation Sans" fill="#1e8ae6">A</text><text x="16.6" y="15.8" font-size="10.5" font-family="Liberation Sans" fill="#1e8ae6">A</text><text x="17.4" y="25.8" font-size="10.5" font-family="Liberation Sans" fill="#333">Z</text></svg>
<div class="t" style="left:933.4px;top:121.1px;font-size:12.5px;line-height:14.4px;color:#242424;font-weight:normal;transform-origin:0 0;transform:scaleX(0.8563);">Trier</div>
<div class="abs" style="left:971px;top:89px;width:1px;height:62px;background:#e0e0e0"></div>
<div class="abs" style="left:978px;top:82px;width:42px;height:76px;background:#e6e6e6;border:1px solid #8e8e8e;border-radius:5px"></div>
<svg class="abs" style="left:985px;top:86px;" width="28" height="30" viewBox="0 0 28 30"><path d="M1 1 H27 V4.5 L17.5 16 V28.5 H10.5 V16 L1 4.5 Z" fill="none" stroke="#333" stroke-width="1.2" stroke-linejoin="round"/></svg>
<div class="t" style="left:984px;top:121.1px;font-size:12.5px;line-height:14.4px;color:#242424;font-weight:normal;transform-origin:0 0;transform:scaleX(0.9393);">Filtrer</div>
<svg class="abs" style="left:1025px;top:86px;" width="18" height="17" viewBox="0 0 18 17"><path d="M1.2 3.2 V0.6 H16.8 V3.2 L11.5 7.5 M1.2 3.2 L7.3 8.8 V15.8" fill="none" stroke="#a8a8a8" stroke-width="1.1" stroke-linejoin="round"/><path d="M10.2 9.4 L16.8 15.8 M16.8 9.4 L10.2 15.8" stroke="#a8a8a8" stroke-width="1"/></svg>
<div class="t" style="left:1046px;top:87.7px;font-size:12.5px;line-height:14.4px;color:#a8a8a8;font-weight:normal;transform-origin:0 0;transform:scaleX(0.9144);">Effacer</div>
<svg class="abs" style="left:1025px;top:112px;" width="18" height="17" viewBox="0 0 18 17"><path d="M1.2 3.2 V0.6 H16.8 V3.2 L11.5 7.5 M1.2 3.2 L7.3 8.8 V15.8" fill="none" stroke="#a8a8a8" stroke-width="1.1" stroke-linejoin="round"/><path d="M9 12 A3.6 3.6 0 0 1 15.8 10.5 M16 13.5 A3.6 3.6 0 0 1 9.4 15" fill="none" stroke="#a8a8a8" stroke-width="1"/><path d="M16 8.5 V11 H13.5 M9.2 17 V14.5 H11.5" fill="none" stroke="#a8a8a8" stroke-width="1"/></svg>
<div class="t" style="left:1046px;top:114.0px;font-size:12.5px;line-height:14.4px;color:#a8a8a8;font-weight:normal;transform-origin:0 0;transform:scaleX(0.9347);">Réappliquer</div>
<svg class="abs" style="left:1025px;top:138px;" width="18" height="18" viewBox="0 0 18 18"><path d="M1.2 3.2 V0.6 H16.8 V3.2 L11.5 7.5 M1.2 3.2 L7.3 8.8 V15.8" fill="none" stroke="#333" stroke-width="1.1" stroke-linejoin="round"/><g transform="translate(12.3 11.2)" fill="#1e8ae6"><path d="M0 -4.6 L1.6 -2.6 L4 -2.3 L3 0 L4 2.3 L1.6 2.6 L0 4.6 L-1.6 2.6 L-4 2.3 L-3 0 L-4 -2.3 L-1.6 -2.6 Z"/><circle r="1.4" fill="#f8f8f8"/><circle r=".8" fill="#1e8ae6"/></g></svg>
<div class="t" style="left:1046px;top:139.7px;font-size:12.5px;line-height:14.4px;color:#242424;font-weight:normal;transform-origin:0 0;transform:scaleX(0.9309);">Avancé</div>
<svg class="abs" style="left:1144px;top:87px;" width="32" height="30" viewBox="0 0 32 30"><path d="M4.5 3.5 H17 M4.5 8 H17 M4.5 12.5 H17" stroke="#333" stroke-width="1.1"/><rect x="20.5" y="0.5" width="10" height="27" fill="none" stroke="#333" stroke-width="1.1"/><path d="M20.5 9.5 H30.5 M20.5 18.5 H30.5" stroke="#333" stroke-width="1"/><path d="M24 5 H27 M24 14 H27 M24 23 H27" stroke="#1e8ae6" stroke-width="1.1"/><path d="M5 14.5 C0 18 1 25 9 25.5" fill="none" stroke="#1e8ae6" stroke-width="1.2"/><path d="M5.5 21 L9.5 25.3 L5.5 29.5" fill="none" stroke="#1e8ae6" stroke-width="1.2"/></svg>
<div class="t" style="left:1136.5px;top:121.1px;font-size:12.5px;line-height:14.4px;color:#242424;font-weight:normal;transform-origin:0 0;transform:scaleX(0.9565);">Convertir</div>
<svg class="abs" style="left:1194px;top:86px;" width="17" height="16" viewBox="0 0 17 16"><path d="M0.5 6.5 V15.5 H15.5 V1.5 H9 M0.5 6.5 H15.5 M0.5 11 H15.5 M5.5 6.5 V15.5 M10.5 1.5 V15.5" fill="none" stroke="#a8a8a8" stroke-width="1.1"/><path d="M6.5 0 L2 5 H5 L2.5 9.5 L8.5 3.5 H5.5 L8 0 Z" fill="#a8a8a8"/></svg>
<div class="t" style="left:1214.4px;top:87.7px;font-size:12.5px;line-height:14.4px;color:#a8a8a8;font-weight:normal;transform-origin:0 0;transform:scaleX(0.9243);">Remplissage instantané</div>
<svg class="abs" style="left:1195px;top:112px;" width="16" height="17" viewBox="0 0 16 17"><path d="M1.5 0.8 H12.5 V9" fill="none" stroke="#1a6fd0" stroke-width="1.2"/><rect x="1.5" y="0.8" width="11" height="4.5" fill="#80b8f0" stroke="#1a6fd0" stroke-width="1.1"/><path d="M1.5 5.3 V15.5 H10" fill="none" stroke="#333" stroke-width="1.1"/><path d="M1.5 10.5 H8.5 L10.5 13 L8.5 15.5 H1.5 Z" fill="#80b8f0" stroke="#1a6fd0" stroke-width="1.1"/><path d="M8.5 9.8 L15.2 16.5 M15.2 9.8 L8.5 16.5" stroke="#e8363f" stroke-width="1.2"/></svg>
<div class="t" style="left:1214.4px;top:114.0px;font-size:12.5px;line-height:14.4px;color:#242424;font-weight:normal;transform-origin:0 0;transform:scaleX(0.9473);">Supprimer les doublons</div>
<svg class="abs" style="left:1194px;top:138px;" width="18" height="17" viewBox="0 0 18 17"><path d="M8 1.5 H0.8 V6 H8 M7 9 H0.8 V13.5 H7" fill="none" stroke="#333" stroke-width="1.1"/><path d="M7.5 3 L10.5 6 L16 0.5" fill="none" stroke="#2ea44f" stroke-width="1.2"/><circle cx="11.5" cy="12.3" r="3.8" fill="#f8f8f8" stroke="#e8363f" stroke-width="1.4"/><path d="M9 9.8 L14 14.8" stroke="#e8363f" stroke-width="1.3"/></svg>
<div class="t" style="left:1214.4px;top:139.7px;font-size:12.5px;line-height:14.4px;color:#242424;font-weight:normal;transform-origin:0 0;transform:scaleX(0.9347);">Validation des données</div>
<svg class="abs" style="left:1347.4px;top:142.4px;" width="7.2" height="5.2" viewBox="0 0 7.2 5.2"><path d="M1 1.04 L3.6 3.6399999999999997 L6.2 1.04" fill="none" stroke="#444" stroke-width="1"/></svg>
<svg class="abs" style="left:1365px;top:86px;" width="18" height="15" viewBox="0 0 18 15"><path d="M7.7 2.8 V1 H1.2 V4.8 H7.7 M7.7 11.5 V13.3 H1.2 V9.5 H7.7" fill="none" stroke="#333" stroke-width="1.1"/><path d="M2.5 7.2 H8.8 M6.8 5.4 L8.8 7.2 L6.8 9" fill="none" stroke="#1e8ae6" stroke-width="1.1"/><rect x="10.6" y="5" width="6.5" height="4.6" fill="none" stroke="#1e8ae6" stroke-width="1.1"/><path d="M12.6 7.3 H15.1" stroke="#555" stroke-width="1"/></svg>
<div class="t" style="left:1386.3px;top:87.7px;font-size:12.5px;line-height:14.4px;color:#242424;font-weight:normal;transform-origin:0 0;transform:scaleX(0.9490);">Consolider</div>
<svg class="abs" style="left:1365px;top:111px;" width="18" height="18" viewBox="0 0 18 18"><rect x="1.2" y="5.5" width="6.5" height="6" fill="none" stroke="#a8a8a8" stroke-width="1.1"/><rect x="10.4" y="1.3" width="6.3" height="6" fill="none" stroke="#a8a8a8" stroke-width="1.1"/><rect x="10.4" y="10.6" width="6.3" height="6.2" fill="none" stroke="#a8a8a8" stroke-width="1.1"/><path d="M7.7 8.5 L10.4 5 M7.7 8.5 L10.4 12" fill="none" stroke="#a8a8a8" stroke-width="1"/><path d="M3 7.5 H6 M3 9.5 H6 M12 3.5 H15 M12 5.3 H15 M12 12.8 H15 M12 14.7 H15" stroke="#a8a8a8" stroke-width=".9"/></svg>
<div class="t" style="left:1386.3px;top:114.0px;font-size:12.5px;line-height:14.4px;color:#a8a8a8;font-weight:normal;transform-origin:0 0;transform:scaleX(0.9058);">Relations</div>
<svg class="abs" style="left:1365px;top:137px;" width="18" height="18" viewBox="0 0 18 18"><path d="M1.5 3 C4 1 12 0.5 15 2 L17 3.5 V15.5 L14 17 H3 L1.5 15.5 Z" fill="#5fb52e"/><path d="M3.2 4.2 H10 V15.5 H3.2 Z" fill="#3f9a1e" stroke="#e8f5e0" stroke-width=".8"/><path d="M7.5 6.5 V12 C7.5 13.5 5.5 13.5 5 12.5" fill="none" stroke="#fff" stroke-width="1.1"/><g fill="#e8f5e0"><rect x="11" y="5" width="2" height="2"/><rect x="14" y="5" width="2" height="2"/><rect x="11" y="8.5" width="2" height="2"/><rect x="14" y="8.5" width="2" height="2"/><rect x="11" y="12" width="2" height="2"/><rect x="14" y="12" width="2" height="2"/></g></svg>
<div class="t" style="left:1386.3px;top:139.7px;font-size:12.5px;line-height:14.4px;color:#242424;font-weight:normal;transform-origin:0 0;transform:scaleX(0.9229);">Gérer le modèle de données</div>
<svg class="abs" style="left:1576px;top:89px;" width="32" height="29" viewBox="0 0 32 29"><path d="M9.6 1.1 H27.5 V9 M9.6 22.4 H18.5" fill="none" stroke="#333" stroke-width="1.1"/><path d="M0.6 8.3 V15.5" stroke="#333" stroke-width="1.1"/><path d="M9.6 8.3 H27 M9.6 15.5 H19 M18.4 1.1 V22.4" stroke="#666" stroke-width="1"/><path d="M9.6 1.1 V22.4" stroke="#555" stroke-width="1"/><rect x="0.7" y="1.2" width="8.9" height="7.1" fill="#8ab8ec" stroke="#1a6fd0" stroke-width="1.2"/><rect x="0.7" y="15.5" width="8.9" height="7" fill="#8ab8ec" stroke="#1a6fd0" stroke-width="1.2"/><path d="M20.8 13.5 C20.5 9.5 29.5 9 29.5 13.8 C29.5 17.2 25 17.5 24.6 21.5 V23" fill="none" stroke="#2a8ad8" stroke-width="1.4"/><rect x="23.8" y="25.6" width="1.8" height="1.8" fill="#2a8ad8"/></svg>
<div class="t" style="left:1570px;top:121.2px;font-size:12.5px;line-height:14.4px;color:#242424;font-weight:normal;transform-origin:0 0;transform:scaleX(0.9287);">Analyse</div>
<div class="t" style="left:1560px;top:137.0px;font-size:12.5px;line-height:14.4px;color:#242424;font-weight:normal;transform-origin:0 0;transform:scaleX(0.8973);">scénarios</div>
<svg class="abs" style="left:1611.4px;top:142.4px;" width="7.2" height="5.2" viewBox="0 0 7.2 5.2"><path d="M1 1.04 L3.6 3.6399999999999997 L6.2 1.04" fill="none" stroke="#444" stroke-width="1"/></svg>
<svg class="abs" style="left:1638px;top:88px;" width="28" height="26" viewBox="0 0 28 26"><path d="M0.6 20.6 V0.6 H27.4 V20.6 H12 L8.6 24.4 H0.6 Z" fill="none" stroke="#333" stroke-width="1.1" stroke-linejoin="round"/><path d="M0.6 20.6 H12" stroke="#333" stroke-width="1.1"/><path d="M0.6 7.4 H14.5 M14.5 14.3 H27.4 M9.2 0.6 V8 M9.2 13 V20.6 M18.25 0.6 V7 M18.25 12 V20.6" stroke="#555" stroke-width="1"/><path d="M1 16.6 L5.1 12.3 L8.25 15 L12.9 10.4" fill="none" stroke="#2a8ad8" stroke-width="1.2"/><path d="M12.9 10.4 L15.75 8.2 L18 10 L25.2 3" fill="none" stroke="#e8363f" stroke-width="1.2"/><path d="M21 2.8 H25.6 V7.4" fill="none" stroke="#e8363f" stroke-width="1.2"/></svg>
<div class="t" style="left:1627.7px;top:121.2px;font-size:12.5px;line-height:14.4px;color:#242424;font-weight:normal;transform-origin:0 0;transform:scaleX(0.9097);">Feuille de</div>
<div class="t" style="left:1628.7px;top:137.0px;font-size:12.5px;line-height:14.4px;color:#242424;font-weight:normal;transform-origin:0 0;transform:scaleX(0.9396);">prévision</div>
<svg class="abs" style="left:1708px;top:88px;" width="26" height="26" viewBox="0 0 26 26"><path d="M10.6 0.8 H4.3 V7 M4.3 17.5 V24.3 H10.6" fill="none" stroke="#555" stroke-width="1.1"/><rect x="13.5" y="0.6" width="10.2" height="23.8" fill="none" stroke="#333" stroke-width="1.2"/><path d="M13.5 6.5 H23.7 M13.5 12.5 H23.7 M13.5 18.5 H23.7" stroke="#333" stroke-width="1.1"/><rect x="0.6" y="8.6" width="8.2" height="8" fill="#f8f8f8" stroke="#333" stroke-width="1.2"/><path d="M4.7 10.3 V15 M2.4 12.6 H7" stroke="#1e8ae6" stroke-width="1.2"/></svg>
<div class="t" style="left:1698.4px;top:122.2px;font-size:12.5px;line-height:14.4px;color:#242424;font-weight:normal;transform-origin:0 0;transform:scaleX(0.9291);">Grouper</div>
<svg class="abs" style="left:1715.9px;top:140.9px;" width="7.2" height="5.2" viewBox="0 0 7.2 5.2"><path d="M1 1.04 L3.6 3.6399999999999997 L6.2 1.04" fill="none" stroke="#444" stroke-width="1"/></svg>
<svg class="abs" style="left:1760px;top:88px;" width="26" height="26" viewBox="0 0 26 26"><path d="M10.6 0.8 H4.3 V7 M4.3 17.5 V24.3 H10.6" fill="none" stroke="#555" stroke-width="1.1"/><rect x="13.5" y="0.6" width="10.2" height="23.8" fill="none" stroke="#333" stroke-width="1.2"/><path d="M13.5 6.5 H23.7 M13.5 12.5 H23.7 M13.5 18.5 H23.7" stroke="#333" stroke-width="1.1"/><rect x="0.6" y="8.6" width="8.2" height="8" fill="#f8f8f8" stroke="#e8363f" stroke-width="1.2"/><path d="M1.2 16 L8.2 9.2" stroke="#e8363f" stroke-width="1.1"/></svg>
<div class="t" style="left:1748.3px;top:122.2px;font-size:12.5px;line-height:14.4px;color:#242424;font-weight:normal;transform-origin:0 0;transform:scaleX(0.9086);">Dissocier</div>
<svg class="abs" style="left:1767.9px;top:140.9px;" width="7.2" height="5.2" viewBox="0 0 7.2 5.2"><path d="M1 1.04 L3.6 3.6399999999999997 L6.2 1.04" fill="none" stroke="#444" stroke-width="1"/></svg>
<svg class="abs" style="left:1807px;top:88px;" width="29" height="26" viewBox="0 0 29 26"><path d="M8.4 0.8 H3.3 V6.3" fill="none" stroke="#a8a8a8" stroke-width="1.1"/><rect x="11.3" y="0.6" width="16.4" height="23.8" fill="none" stroke="#a8a8a8" stroke-width="1.1"/><path d="M11.3 6.5 H27.7 M11.3 12.5 H27.7 M11.3 18.5 H27.7 M19.5 0.6 V24.4" stroke="#a8a8a8" stroke-width="1.1"/><rect x="0.6" y="6.5" width="8" height="7.7" fill="#f8f8f8" stroke="#a8a8a8" stroke-width="1.1"/><rect x="0.6" y="16.6" width="8" height="7.8" fill="#f8f8f8" stroke="#a8a8a8" stroke-width="1.1"/><path d="M4.6 8 V12.8 M2.2 10.4 H7 M4.6 18.1 V23 M2.2 20.5 H7" stroke="#a8a8a8" stroke-width="1"/></svg>
<div class="t" style="left:1806.5px;top:122.2px;font-size:12.5px;line-height:14.4px;color:#a8a8a8;font-weight:normal;transform-origin:0 0;transform:scaleX(0.8881);">Sous-</div>
<div class="t" style="left:1809px;top:137.0px;font-size:12.5px;line-height:14.4px;color:#a8a8a8;font-weight:normal;transform-origin:0 0;transform:scaleX(1.0159);">total</div>
<svg class="abs" style="left:1849px;top:89px;" width="15" height="11" viewBox="0 0 15 11"><path d="M0.5 3.5 H4.5 M2.5 1.5 V5.5" stroke="#a8a8a8"/><path d="M6 0.5 H14 M8 3.5 H14 M8 6.5 H14 M6 9.5 H14" stroke="#a8a8a8"/></svg>
<svg class="abs" style="left:1849px;top:114px;" width="15" height="11" viewBox="0 0 15 11"><path d="M0.5 3.5 H4.5" stroke="#a8a8a8"/><path d="M6 0.5 H14 M8 3.5 H14 M8 6.5 H14 M6 9.5 H14" stroke="#a8a8a8"/></svg>
<svg class="abs" style="left:1864px;top:164px;" width="8" height="8" viewBox="0 0 8 8"><path d="M0.5 7.5 V0.5 H7.5 V7.5 Z" fill="none" stroke="#b8b8b8" stroke-width=".8"/><path d="M2 2 L6 6 M6 3.5 V6 H3.5" fill="none" stroke="#999" stroke-width=".9"/></svg>
<svg class="abs" style="left:1892px;top:161px;" width="11" height="7" viewBox="0 0 11 7"><path d="M0.8 0.8 L5.5 5.8 L10.2 0.8" fill="none" stroke="#333" stroke-width="1.2"/></svg>
<div class="abs" style="left:8.5px;top:186px;width:101px;height:26px;border:1px solid #d8d8d8;border-bottom-color:#c4c4c4;border-radius:5px;background:#f9f9f9"></div>
<div class="t" style="left:15.6px;top:191.8px;font-size:13px;line-height:14.9px;color:#242424;font-weight:normal;transform-origin:0 0;transform:scaleX(0.8669);">L45</div>
<svg class="abs" style="left:94px;top:197px;" width="10" height="6" viewBox="0 0 10 6"><path d="M0.7 0.7 L5 5 L9.3 0.7" fill="none" stroke="#333" stroke-width="1.2"/></svg>
<svg class="abs" style="left:118px;top:194px;" width="4" height="11" viewBox="0 0 4 11"><circle cx="2" cy="1.3" r="1.1" fill="#333"/><circle cx="2" cy="5.5" r="1.1" fill="#333"/><circle cx="2" cy="9.7" r="1.1" fill="#333"/></svg>
<div class="abs" style="left:130px;top:186px;width:73.5px;height:26px;border:1px solid #d8d8d8;border-bottom-color:#c4c4c4;border-radius:5px;background:#f9f9f9"></div>
<svg class="abs" style="left:137px;top:193px;" width="12" height="12" viewBox="0 0 12 12"><path d="M0.5 0.5 L11.5 11.5 M11.5 0.5 L0.5 11.5" stroke="#b4b4b4" stroke-width="1.1"/></svg>
<svg class="abs" style="left:158.5px;top:193px;" width="17" height="12" viewBox="0 0 17 12"><path d="M0.5 6 L5.5 11 L16.5 0.5" fill="none" stroke="#c4c4c4" stroke-width="1.1"/></svg>
<div class="t" style="left:184px;top:187.7px;font-size:18px;line-height:20.7px;color:#333;font-weight:normal;font-family:'Liberation Serif',serif;font-style:italic">f</div>
<div class="t" style="left:190px;top:190.4px;font-size:14.5px;line-height:16.7px;color:#333;font-weight:normal;font-family:'Liberation Serif',serif;font-style:italic">x</div>
<div class="abs" style="left:208.5px;top:186px;width:1704px;height:26px;border:1px solid #d8d8d8;border-bottom-color:#c4c4c4;border-radius:5px;background:#f9f9f9"></div>
<div class="t" style="left:219px;top:190.9px;font-size:14px;line-height:16.1px;color:#242424;font-weight:normal;transform-origin:0 0;transform:scaleX(0.9907);">=[@[Montant total]]/[@[Nb nuits]]</div>
<svg class="abs" style="left:1895px;top:195px;" width="11" height="7" viewBox="0 0 11 7"><path d="M0.7 0.7 L5.5 5.5 L10.3 0.7" fill="none" stroke="#333" stroke-width="1.2"/></svg>
<svg class="abs" style="left:13px;top:222px;" width="10" height="10" viewBox="0 0 10 10"><path d="M9.5 0.5 V9.5 H0.5 Z" fill="#d2d2d2"/></svg>
<div class="abs" style="left:25px;top:235px;width:1875px;height:1px;background:#a9a9a9"></div>
<div class="abs" style="left:0px;top:235px;width:25px;height:1px;background:#dcdcdc"></div>
<div class="abs" style="left:25px;top:219px;width:1px;height:768px;background:#a9a9a9"></div>
<svg class="abs" style="left:1904px;top:223px;" width="10" height="8" viewBox="0 0 10 8"><path d="M0.5 7 L5 1 L9.5 7 Z" fill="#6e6e6e" stroke="#6e6e6e" stroke-linejoin="round"/></svg>
<svg class="abs" style="left:1904px;top:975px;" width="10" height="8" viewBox="0 0 10 8"><path d="M0.5 1 L5 7 L9.5 1 Z" fill="#6e6e6e" stroke="#6e6e6e" stroke-linejoin="round"/></svg>
<div class="abs" style="left:1905px;top:555px;width:8px;height:328px;background:#777;border-radius:4px"></div>
<div class="abs" style="left:1898px;top:236px;width:1px;height:750px;background:#e0e0e0"></div>
<div class="abs" style="left:0px;top:985.5px;width:1899px;height:1px;background:#e0e0e0"></div>
<div class="abs" style="left:0px;top:986px;width:1920px;height:54px;background:#f7f7f7"></div>
<div class="abs" style="left:0px;top:985.5px;width:1899px;height:1px;background:#e2e2e2"></div>
<svg class="abs" style="left:28px;top:996px;" width="8" height="12" viewBox="0 0 8 12"><path d="M7 0.8 L1.5 6 L7 11.2" fill="none" stroke="#a6a6a6" stroke-width="1.2"/></svg>
<svg class="abs" style="left:61px;top:996px;" width="8" height="12" viewBox="0 0 8 12"><path d="M1 0.8 L6.5 6 L1 11.2" fill="none" stroke="#a6a6a6" stroke-width="1.2"/></svg>
<div class="abs" style="left:114.5px;top:986px;width:75px;height:29.5px;border:1px solid #dcdcdc;border-top:none;border-radius:0 0 6px 6px;background:#f3f3f3"></div>
<div class="abs" style="left:117px;top:992px;width:70px;height:22px;border-radius:4px;background:linear-gradient(#e9e9e9 0%,#dcdcdc 55%,#b9c0c6 100%)"></div>
<div class="t" style="left:125.5px;top:991.3px;font-size:13.5px;line-height:15.5px;color:#333333;font-weight:bold;transform-origin:0 0;transform:scaleX(0.9648);letter-spacing:0">Données</div>
<div class="abs" style="left:124px;top:1008.8px;width:56px;height:2px;background:#107c41;border-radius:1px"></div>
<div class="abs" style="left:192.5px;top:993px;width:1px;height:17px;background:#d0d0d0"></div>
<div class="t" style="left:205.4px;top:994.8px;font-size:13.5px;line-height:15.5px;color:#242424;font-weight:normal;transform-origin:0 0;transform:scaleX(0.9786);">Analyse</div>
<div class="abs" style="left:266px;top:993px;width:1px;height:17px;background:#d0d0d0"></div>
<svg class="abs" style="left:308.5px;top:996px;" width="12" height="12" viewBox="0 0 12 12"><path d="M6 0 V12 M0 6 H12" stroke="#444" stroke-width="1.2"/></svg>
<svg class="abs" style="left:1153px;top:996px;" width="4" height="12" viewBox="0 0 4 12"><circle cx="2" cy="1.5" r="1.2" fill="#333"/><circle cx="2" cy="6" r="1.2" fill="#333"/><circle cx="2" cy="10.5" r="1.2" fill="#333"/></svg>
<svg class="abs" style="left:1176px;top:997px;" width="8" height="9" viewBox="0 0 8 9"><path d="M7.5 0.5 V8.5 L1 4.5 Z" fill="#6e6e6e" stroke="#6e6e6e" stroke-linejoin="round"/></svg>
<div class="abs" style="left:1188px;top:997px;width:668px;height:9px;background:#777;border-radius:4.5px"></div>
<svg class="abs" style="left:1886px;top:997px;" width="8" height="9" viewBox="0 0 8 9"><path d="M0.5 0.5 V8.5 L7 4.5 Z" fill="#6e6e6e" stroke="#6e6e6e" stroke-linejoin="round"/></svg>
<div class="t" style="left:12px;top:1023.7px;font-size:12px;line-height:13.8px;color:#404040;font-weight:normal;transform-origin:0 0;transform:scaleX(0.8861);">Prêt</div>
<svg class="abs" style="left:51px;top:1023px;" width="15" height="14" viewBox="0 0 15 14"><path d="M0.5 12.5 V0.5 H13.5 V5" fill="none" stroke="#333" stroke-width="1"/><path d="M0.5 3 H13.5" stroke="#333"/><path d="M2.5 6 H6 M2.5 9 H5" stroke="#333" stroke-width=".9"/><circle cx="10" cy="9.5" r="3.7" fill="#f7f7f7" stroke="#333" stroke-width="1"/><circle cx="10" cy="9.5" r="1.6" fill="#333"/></svg>
<svg class="abs" style="left:82px;top:1021px;" width="16" height="17" viewBox="0 0 16 17"><circle cx="6" cy="2.5" r="1.8" fill="none" stroke="#333" stroke-width="1"/><path d="M0.5 5 L6 6.5 L11.5 5 M6 6.5 V10 L3 15.5 M6 10 L8 12" fill="none" stroke="#333" stroke-width="1.1"/><path d="M9 10.5 L15 16.5 M15 10.5 L9 16.5" stroke="#333" stroke-width="1.1"/></svg>
<div class="t" style="left:101.3px;top:1023.5px;font-size:12px;line-height:13.8px;color:#383838;font-weight:bold;transform-origin:0 0;transform:scaleX(0.8854);">Accessibilité : consultez nos recommandations</div>
<div class="abs" style="left:1617px;top:1019px;width:40px;height:21px;background:#e6e6e6"></div>
<svg class="abs" style="left:1630px;top:1022px;" width="14" height="14" viewBox="0 0 14 14"><rect x="0.5" y="0.5" width="13" height="13" fill="none" stroke="#222" stroke-width="1"/><path d="M0.5 4.8 H13.5 M0.5 9.2 H13.5 M4.8 0.5 V13.5 M9.2 0.5 V13.5" stroke="#222" stroke-width="1"/></svg>
<svg class="abs" style="left:1670px;top:1022px;" width="15" height="14" viewBox="0 0 15 14"><rect x="0.5" y="0.5" width="14" height="13" fill="none" stroke="#222" stroke-width="1"/><rect x="3" y="3" width="9" height="8" fill="none" stroke="#222" stroke-width="1"/><path d="M5 5.5 H10 M5 7.5 H10 M5 9.5 H10" stroke="#222" stroke-width=".8"/></svg>
<svg class="abs" style="left:1709.5px;top:1022px;" width="15" height="14" viewBox="0 0 15 14"><rect x="0.5" y="0.5" width="14" height="13" fill="none" stroke="#222" stroke-width="1"/><path d="M4.5 0.5 V6.5 H10.5 V0.5" fill="none" stroke="#222" stroke-width="1"/></svg>
<div class="abs" style="left:1743px;top:1028px;width:8px;height:1.2px;background:#333"></div>
<div class="abs" style="left:1756px;top:1028.5px;width:100px;height:1px;background:#8a8a8a"></div>
<div class="abs" style="left:1804px;top:1024px;width:5px;height:11px;background:#6a6a6a"></div>
<svg class="abs" style="left:1861px;top:1024px;" width="9" height="9" viewBox="0 0 9 9"><path d="M4.5 0 V9 M0 4.5 H9" stroke="#333" stroke-width="1.1"/></svg>
<div class="t" style="left:1882.4px;top:1023.1px;font-size:12px;line-height:13.8px;color:#242424;font-weight:normal;transform-origin:0 0;transform:scaleX(0.8612);">100 %</div>
<div class="t" style="left:1526.7px;top:947.6px;font-size:19.5px;line-height:22.4px;color:#c2c2c2;font-weight:normal;transform-origin:0 0;transform:scaleX(1.0138);">Activer Windows</div>
<div class="abs" style="left:1500px;top:968px;width:400px;height:17.5px;overflow:hidden"><div class="t" style="left:26.7px;top:5.2px;font-size:14px;line-height:16.1px;color:#c4c4c4;font-weight:normal;transform-origin:0 0;transform:scaleX(1.0525);">Accédez aux paramètres pour activer Windows.</div></div>
<div class="abs" style="left:0px;top:1040px;width:1920px;height:40px;background:linear-gradient(90deg,#1c1a18 0%,#1e1c1a 42%,#2a2725 50%,#2c2a28 65%,#2e2e2d 85%,#303030 100%)"></div>
<svg class="abs" style="left:15.5px;top:1051.5px;" width="17" height="17" viewBox="0 0 17 17"><path d="M0 2.3 L7 1.3 V7.8 H0 Z M8 1.1 L17 0 V7.8 H8 Z M0 8.8 H7 V15.3 L0 14.3 Z M8 8.8 H17 V17 L8 15.8 Z" fill="#fff"/></svg>
<div class="abs" style="left:48px;top:1040px;width:288px;height:40px;background:#f3f3f3;border-top:1px solid #e0e0e0"></div>
<svg class="abs" style="left:60px;top:1052px;" width="17" height="17" viewBox="0 0 17 17"><circle cx="10.5" cy="6.5" r="5.5" fill="none" stroke="#222" stroke-width="1.3"/><path d="M6.5 10.5 L0.8 16.2" stroke="#222" stroke-width="1.5"/></svg>
<div class="t" style="left:88.5px;top:1052.0px;font-size:15px;line-height:17.2px;color:#2a2a2a;font-weight:normal;transform-origin:0 0;transform:scaleX(0.9795);">Taper ici pour rechercher</div>
<svg class="abs" style="left:352px;top:1050px;" width="22" height="20" viewBox="0 0 22 20"><path d="M0.5 2 H8 L10 4 H21.5 V18.5 H0.5 Z" fill="#f0c050"/><rect x="0.5" y="5" width="21" height="13.5" fill="#ffd766"/><path d="M6 12 H16 V18.5 H13 V15 H9 V18.5 H6 Z" fill="#1e88e5"/></svg>
<svg class="abs" style="left:400px;top:1048px;" width="26" height="26" viewBox="0 0 26 26"><circle cx="11.5" cy="11.5" r="11" fill="#db4437"/><path d="M11.5 11.5 L2 6 A11 11 0 0 0 6 21 Z" fill="#0f9d58"/><path d="M11.5 11.5 L6 21 A11 11 0 0 0 22.5 11.5 Z" fill="#ffcd40"/><circle cx="11.5" cy="11.5" r="5" fill="#fff"/><circle cx="11.5" cy="11.5" r="4" fill="#4285f4"/><circle cx="18.5" cy="18.5" r="6.5" fill="#c2185b"/><text x="16.6" y="21.5" font-size="8" fill="#fff" font-family="Liberation Sans">r</text></svg>
<svg class="abs" style="left:449px;top:1048px;" width="25" height="25" viewBox="0 0 25 25"><circle cx="12" cy="13" r="11" fill="#1f6fd1"/><circle cx="12.5" cy="12.5" r="8" fill="#5aa8f0"/><ellipse cx="12.5" cy="13" rx="6" ry="4.5" fill="#e8f1fb"/><path d="M7 10.5 L12.5 14 L18 10.5" fill="none" stroke="#9ab8d8" stroke-width="1"/><path d="M17 2 C22 4 24 9 23 13 C21 7 18 5 14 5 Z" fill="#1f6fd1"/></svg>
<svg class="abs" style="left:498px;top:1048px;" width="24" height="24" viewBox="0 0 24 24"><path d="M1.5 2.5 H8 M1.5 2.5 V8.5 M22.5 2.5 H16 M22.5 2.5 V8.5 M22.5 21.5 V15 M22.5 21.5 H16 M6 6.5 L12 12 L18 6.5 M12 12 V17 L16.5 21" fill="none" stroke="#f2b81d" stroke-width="3"/></svg>
<div class="abs" style="left:547.5px;top:1049px;width:22px;height:22px;background:#1e6fc4;border-radius:3px"></div>
<svg class="abs" style="left:549.5px;top:1053px;" width="18" height="14" viewBox="0 0 18 14"><path d="M1 2 L9 8.5 L17 2 L13 12 L9 9.5 L5 12 Z" fill="none" stroke="#fff" stroke-width="1.3" stroke-linejoin="round"/></svg>
<svg class="abs" style="left:596px;top:1048px;" width="24" height="24" viewBox="0 0 24 24"><rect x="1" y="1.5" width="19" height="14" fill="#2a4fa8" stroke="#c8d0d8" stroke-width="1.2"/><path d="M2 2.5 L19 4 V14.5 H2 Z" fill="#3a6cd8"/><path d="M7 17 H14 L16 20 H5 Z" fill="#b8c0c8"/><circle cx="17.5" cy="17.5" r="5.5" fill="#d8dde0"/><path d="M15 17.5 H20 M18.5 16 L20 17.5 L18.5 19" fill="none" stroke="#2e8b57" stroke-width="1.1"/></svg>
<svg class="abs" style="left:647px;top:1048px;" width="19" height="24" viewBox="0 0 19 24"><rect x="0.5" y="0.5" width="18" height="23" rx="1.5" fill="#9aa3ab"/><rect x="2.5" y="2.5" width="14" height="4" fill="#5ec8f8"/><g fill="#e6e9ec"><rect x="2.5" y="9" width="3.5" height="3"/><rect x="7.5" y="9" width="3.5" height="3"/><rect x="12.5" y="9" width="3.5" height="3"/><rect x="2.5" y="14" width="3.5" height="3"/><rect x="7.5" y="14" width="3.5" height="3"/><rect x="2.5" y="19" width="3.5" height="3"/><rect x="7.5" y="19" width="3.5" height="3"/></g><rect x="12.5" y="14" width="3.5" height="8" fill="#2d6db5"/></svg>
<div class="abs" style="left:682px;top:1040px;width:48px;height:40px;background:#454545"></div>
<svg class="abs" style="left:693px;top:1049px;" width="24" height="22" viewBox="0 0 24 22"><rect x="6" y="0" width="18" height="22" rx="1.5" fill="#21a366"/><rect x="6" y="0" width="18" height="7.3" rx="1.5" fill="#33c481"/><rect x="6" y="14.7" width="18" height="7.3" fill="#107c41"/><rect x="0" y="4.5" width="13.5" height="13" rx="1.2" fill="#107c41"/><path d="M3.3 7.3 H5.4 L6.8 9.7 L8.2 7.3 H10.3 L8 11 L10.4 14.7 H8.3 L6.8 12.3 L5.3 14.7 H3.2 L5.6 11 Z" fill="#fff"/></svg>
<div class="abs" style="left:392px;top:1078px;width:40px;height:2px;background:#76b9ed"></div>
<div class="abs" style="left:441px;top:1078px;width:40px;height:2px;background:#76b9ed"></div>
<div class="abs" style="left:588px;top:1078px;width:40px;height:2px;background:#76b9ed"></div>
<div class="abs" style="left:637px;top:1078px;width:40px;height:2px;background:#76b9ed"></div>
<div class="abs" style="left:682px;top:1078px;width:48px;height:2px;background:#76b9ed"></div>
<svg class="abs" style="left:1706.5px;top:1055.5px;" width="13" height="8" viewBox="0 0 13 8"><path d="M0.8 7 L6.5 1.2 L12.2 7" fill="none" stroke="#fff" stroke-width="1.2"/></svg>
<svg class="abs" style="left:1731.5px;top:1051.5px;" width="13" height="17" viewBox="0 0 13 17"><path d="M2 2.5 C4 0.5 9 0.5 11 2.5 M2 14.5 C4 16.5 9 16.5 11 14.5" fill="none" stroke="#ddd" stroke-width="1"/><rect x="0.8" y="5" width="7.5" height="7" rx="1" fill="none" stroke="#eee" stroke-width="1.1"/><path d="M8.3 7 L11.5 5.5 V11.5 L8.3 10" fill="none" stroke="#eee" stroke-width="1.1"/></svg>
<svg class="abs" style="left:1756px;top:1054px;" width="13" height="12" viewBox="0 0 13 12"><path d="M1 11 A10 10 0 0 1 11 1 M3.5 11 A7.5 7.5 0 0 1 11 3.5 M6 11 A5 5 0 0 1 11 6" fill="none" stroke="#bbb" stroke-width="1"/><circle cx="10.2" cy="10.2" r="1.5" fill="#fff"/></svg>
<svg class="abs" style="left:1776.5px;top:1053px;" width="17" height="14" viewBox="0 0 17 14"><path d="M0.8 4.5 H3.5 L7.5 0.8 V13.2 L3.5 9.5 H0.8 Z" fill="none" stroke="#eee" stroke-width="1.1"/><path d="M10 4.5 C11 5.5 11 8.5 10 9.5 M12.2 2.8 C14 4.5 14 9.5 12.2 11.2 M14.5 1 C17 3.5 17 10.5 14.5 13" fill="none" stroke="#ddd" stroke-width="1"/></svg>
<div class="t" style="left:1818.7px;top:1043.7px;font-size:12px;line-height:13.8px;color:#ffffff;font-weight:normal;transform-origin:0 0;transform:scaleX(0.8759);">19:15</div>
<div class="t" style="left:1802.6px;top:1061.6px;font-size:12px;line-height:13.8px;color:#ffffff;font-weight:normal;transform-origin:0 0;transform:scaleX(0.9675);">05/07/2024</div>
<svg class="abs" style="left:1879px;top:1052px;" width="16" height="16" viewBox="0 0 16 16"><path d="M0.6 0.6 H15.4 V12 H10 L8 14.5 L6 12 H0.6 Z" fill="none" stroke="#fff" stroke-width="1.1" stroke-linejoin="round"/></svg>
<div class="abs" style="left:1915px;top:1040px;width:1px;height:40px;background:#8a8a8a"></div>
</body></html>
